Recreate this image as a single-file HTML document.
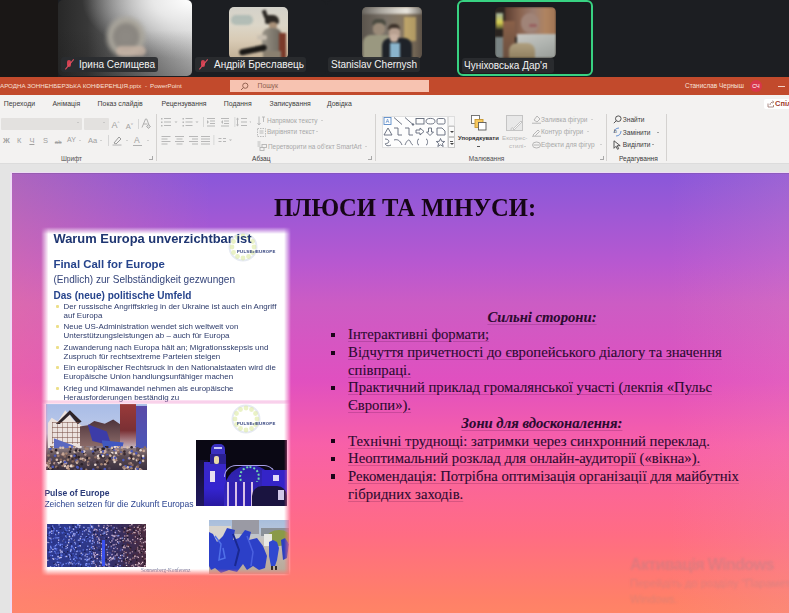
<!DOCTYPE html>
<html><head><meta charset="utf-8">
<style>
*{margin:0;padding:0;box-sizing:border-box}
html,body{width:789px;height:613px;overflow:hidden;background:#e4e4e4;font-family:"Liberation Sans",sans-serif}
.a{position:absolute}
#strip{left:0;top:0;width:789px;height:77px;background:linear-gradient(90deg,#1a1716 0,#1a1716 58px,#1c1e22 58px)}
.tile{position:absolute;top:0;height:76px;border-radius:5px;background:#1c1e22;overflow:hidden}
.lbl{position:absolute;height:15px;background:rgba(42,44,48,.92);border-radius:3px;color:#f2f2f2;font-size:10px;line-height:15px;padding:0 3px;white-space:nowrap}
#title{left:0;top:77px;width:789px;height:18px;background:#c24a2c}
#ribbon{left:0;top:95px;width:789px;height:68px;background:#f3f2f1}
.rt{position:absolute;font-size:8px;color:#4a4a4a;white-space:nowrap;line-height:10px}
.dis{color:#a8a8a8}
#slide{left:11px;top:173px;width:778px;height:440px;overflow:hidden;background:linear-gradient(90deg,rgba(255,135,125,.3) 0px,rgba(255,135,125,0) 200px),linear-gradient(270deg,rgba(235,160,190,.18) 0px,rgba(235,160,190,0) 120px),linear-gradient(180deg,#8a56da 0%,#9058d8 3.4%,#b858d0 20.7%,#cc5cc4 29.8%,#e050c0 47%,#f860a8 61.8%,#ff6c84 82%,#ff8068 97%,#ff8466 100%)}
.st{position:absolute;font-family:"Liberation Serif",serif;color:#240a24;white-space:nowrap}
.hd{position:relative;left:0;width:1062px;text-align:center;font-weight:bold;font-style:italic;white-space:nowrap}
.li{position:relative;padding-left:337.1px;white-space:nowrap}
#txt{-webkit-text-stroke:0.1px #2a0a2c;text-decoration:underline;text-decoration-color:rgba(70,10,60,.2);text-underline-offset:1.5px;text-decoration-thickness:1px}
.li i{position:absolute;left:319.5px;top:6.5px;width:4.3px;height:4.3px;background:#1a0418}
.av{border-radius:5px;overflow:hidden}
.mic{position:absolute;left:3px;top:2px;width:11px;height:11px}
.mic:before{content:"";position:absolute;left:3px;top:1px;width:4px;height:7px;border-radius:2px;background:#d04050}
.mic:after{content:"";position:absolute;left:5px;top:-1px;width:1.3px;height:13px;background:#e05060;transform:rotate(40deg)}
.tb{position:absolute;font-size:6.2px;line-height:12px;color:#f8e0d6;white-space:nowrap}
.inp{background:#e3e1df;border-radius:1px}
.dd{position:absolute;width:0;height:0;border-left:1.6px solid transparent;border-right:1.6px solid transparent;border-top:1.6px solid #b0b0b0}
.dd2{position:absolute;width:0;height:0;border-left:2.2px solid transparent;border-right:2.2px solid transparent;border-top:2.2px solid #444}
.ic{position:absolute;color:#a0a0a0;line-height:10px;white-space:nowrap}
.vs{width:0.8px;background:#d6d6d6}
.gsep{top:19px;width:0.9px;height:47px;background:#d4d2d0}
.lau{position:absolute;width:4px;height:4px;border-right:0.8px solid #a8a8a8;border-bottom:0.8px solid #a8a8a8}
.de{position:absolute;line-height:14px;white-space:nowrap}
.b{font-weight:bold}
.pe{font-size:4.3px;font-weight:bold;color:#2a3a78;letter-spacing:0.25px;white-space:nowrap;line-height:5px}
.bi{position:relative;margin-bottom:2.1px}
.bi:before{content:"";position:absolute;left:-7.5px;top:3px;width:3px;height:3px;background:#ecdf8a;border-radius:1px}
.ph{overflow:hidden;filter:blur(0.5px)}
</style></head><body>
<div id="strip" class="a">
  <div class="tile" style="left:58px;width:134px;background:linear-gradient(180deg,rgba(0,0,0,0) 40%,rgba(30,30,30,.35) 100%),radial-gradient(ellipse 110px 60px at 134px 0px,#ffffff 0%,#e8e8e8 35%,rgba(170,170,170,0) 100%),linear-gradient(90deg,#282828 0%,#383838 22%,#5e5e5e 42%,#808080 62%,#a8a8a8 82%,#c8c8c8 100%)">
    <div class="a" style="left:0;top:0;width:134px;height:76px;filter:blur(1.5px)">
    <div class="a" style="left:46px;top:14px;width:44px;height:46px;border-radius:22px 22px 12px 12px;background:radial-gradient(ellipse 50% 50% at 50% 50%,#8e8a84 0%,#8a8680 50%,#aaa69c 72%,rgba(150,150,140,0) 100%)"></div>
    <div class="a" style="left:58px;top:46px;width:30px;height:10px;border-radius:5px;background:rgba(200,180,165,.8)"></div>
    </div>
    <div class="lbl" style="left:3px;top:57px;width:97px"><span class="mic"></span><span style="position:absolute;left:18px;top:0">Ірина Селищева</span></div>
  </div>
  <div class="tile" style="left:193px;width:133px">
    <div class="a av" style="left:36px;top:7px;width:59px;height:52px;background:linear-gradient(180deg,#d4d2ca 0%,#dcd6c8 35%,#d8cab4 65%,#c0ae94 100%)">
      <div class="a" style="left:0;top:0;width:59px;height:52px;filter:blur(0.8px)">
      <div class="a" style="left:2px;top:8px;width:22px;height:10px;background:rgba(130,160,160,.45);border-radius:5px"></div>
      <div class="a" style="left:34px;top:3px;width:4px;height:8px;background:#2a2622;transform:rotate(-20deg)"></div>
      <div class="a" style="left:36px;top:8px;width:14px;height:9px;background:#2c2824;border-radius:4px 6px 2px 2px"></div>
      <div class="a" style="left:40px;top:15px;width:8px;height:7px;background:#a89078;border-radius:3px"></div>
      <div class="a" style="left:33px;top:21px;width:20px;height:26px;background:linear-gradient(90deg,#9a9488,#6a645a);border-radius:8px 8px 3px 3px"></div>
      <div class="a" style="left:28px;top:28px;width:10px;height:5px;background:#c8beb0;border-radius:2px"></div>
      <div class="a" style="left:50px;top:26px;width:7px;height:26px;background:#7a3a2a"></div>
      <div class="a" style="left:34px;top:44px;width:18px;height:8px;background:#8a8070"></div>
      <div class="a" style="left:10px;top:40px;width:28px;height:6px;background:#1a1816;border-radius:3px;transform:rotate(-12deg)"></div>
      </div>
    </div>
    <div class="lbl" style="left:2px;top:57px;width:111px"><span class="mic"></span><span style="position:absolute;left:19px;top:0">Андрій Бреславець</span></div>
  </div>
  <div class="tile" style="left:327px;width:129px">
    <div class="a av" style="left:35px;top:7px;width:60px;height:52px;background:linear-gradient(90deg,#5a544c 0%,#7a7268 40%,#8a7a62 75%,#5a5046 100%)">
      <div class="a" style="left:0;top:0;width:60px;height:52px;filter:blur(0.8px)">
      <div class="a" style="left:0;top:0;width:60px;height:7px;background:linear-gradient(90deg,#6a6660,#a8a49c 30%,#d8d4cc 60%,#e8e4dc 75%,#7a7670)"></div>
      <div class="a" style="left:42px;top:10px;width:12px;height:24px;background:rgba(220,190,110,.6)"></div>
      <div class="a" style="left:10px;top:12px;width:14px;height:6px;background:#4a4a40;border-radius:5px 5px 1px 1px"></div>
      <div class="a" style="left:11px;top:16px;width:12px;height:12px;background:#9a8a78;border-radius:5px"></div>
      <div class="a" style="left:1px;top:28px;width:30px;height:24px;background:#9a9880;border-radius:8px 8px 0 0"></div>
      <div class="a" style="left:26px;top:17px;width:12px;height:6px;background:#3a3028;border-radius:5px 5px 1px 1px"></div>
      <div class="a" style="left:27px;top:21px;width:11px;height:12px;background:#b8a090;border-radius:4px"></div>
      <div class="a" style="left:20px;top:31px;width:30px;height:22px;background:#1e2228;border-radius:8px 8px 0 0"></div>
      <div class="a" style="left:28px;top:36px;width:10px;height:16px;background:#8ab4cc"></div>
      <div class="a" style="left:28px;top:27px;width:8px;height:8px;background:#c8b0a0;border-radius:3px"></div>
      </div>
    </div>
    <div class="lbl" style="left:1px;top:57px;width:92px"><span style="position:absolute;left:3px;top:0">Stanislav Chernysh</span></div>
  </div>
  <div class="tile" style="left:457px;width:136px;height:76px;border:2.2px solid #38d282;border-radius:6px;background:#1a1c1f">
    <div class="a av" style="left:36px;top:5px;width:61px;height:51px;background:#2a2420">
      <div class="a" style="left:0;top:0;width:61px;height:51px;filter:blur(1.2px)">
      <div class="a" style="left:10px;top:0;width:51px;height:30px;background:linear-gradient(90deg,#5a3c30 0%,#8a6450 30%,#9a7c70 55%,#b08460 80%,#a07454 100%)"></div>
      <div class="a" style="left:1px;top:6px;width:7px;height:16px;background:linear-gradient(180deg,#a0b0a0,#d8d050 60%,#505030)"></div>
      <div class="a" style="left:26px;top:6px;width:18px;height:20px;border-radius:9px;background:#a08478"></div>
      <div class="a" style="left:34px;top:17px;width:8px;height:3px;border-radius:2px;background:#986060"></div>
      <div class="a" style="left:8px;top:14px;width:12px;height:37px;background:linear-gradient(180deg,#8a6048,#6a5040)"></div>
      <div class="a" style="left:22px;top:27px;width:39px;height:24px;background:linear-gradient(160deg,#c8c8c4,#b0b4b0 50%,#989c98)"></div>
      <div class="a" style="left:14px;top:36px;width:26px;height:15px;border-radius:8px 8px 0 0;background:linear-gradient(180deg,#b0a080,#908060)"></div>
      <div class="a" style="left:0;top:30px;width:8px;height:21px;background:#7a8484"></div>
      </div>
    </div>
    <div class="lbl" style="left:3px;top:56px;width:92px"><span style="position:absolute;left:2px;top:0">Чуніховська Дар'я</span></div>
  </div>
</div>
<div id="title" class="a">
  <div class="tb" style="left:0;top:3px">АРОДНА ЗОННЕНБЕРЗЬКА КОНФЕРЕНЦІЯ.pptx</div>
  <div class="tb" style="left:145px;top:3px">-</div>
  <div class="tb" style="left:150px;top:3px">PowerPoint</div>
  <div class="a" style="left:230px;top:3px;width:199px;height:12px;background:#f7c3b1">
    <svg class="a" style="left:10px;top:1.5px" width="9" height="9" viewBox="0 0 9 9"><circle cx="5.3" cy="3.7" r="2.6" fill="none" stroke="#8a5a4a" stroke-width="0.9"/><line x1="3.4" y1="5.6" x2="1" y2="8" stroke="#8a5a4a" stroke-width="0.9"/></svg>
    <div class="a" style="left:27.5px;top:1px;font-size:6.8px;line-height:10px;color:#8e5e50">Пошук</div>
  </div>
  <div class="tb" style="left:685px;top:3px;color:#f8e2da;font-size:6.45px">Станислав Черныш</div>
  <div class="a" style="left:750px;top:3px;width:12px;height:12px;border-radius:6px;background:#d8364a;color:#fff;font-size:5.5px;line-height:12px;text-align:center">СЧ</div>
  <div class="a" style="left:778px;top:8.5px;width:7px;height:1px;background:#f2d0c4"></div>
</div>
<div id="ribbon" class="a">
  <div class="rt" style="left:3.8px;top:3.5px;font-size:6.9px;color:#3c3c3c">Переходи</div>
  <div class="rt" style="left:52.5px;top:3.5px;font-size:6.9px;color:#3c3c3c">Анімація</div>
  <div class="rt" style="left:97.6px;top:3.5px;font-size:6.9px;color:#3c3c3c">Показ слайдів</div>
  <div class="rt" style="left:161.6px;top:3.5px;font-size:6.9px;color:#3c3c3c">Рецензування</div>
  <div class="rt" style="left:223.8px;top:3.5px;font-size:6.9px;color:#3c3c3c">Подання</div>
  <div class="rt" style="left:269.5px;top:3.5px;font-size:6.9px;color:#3c3c3c">Записування</div>
  <div class="rt" style="left:327px;top:3.5px;font-size:6.9px;color:#3c3c3c">Довідка</div>
  <div class="a" style="left:764px;top:4px;width:30px;height:10px;background:#fff;border-radius:2px"></div>
  <svg class="a" style="left:767px;top:5px" width="8" height="8" viewBox="0 0 8 8"><path d="M1 3.5v3.5h5.5V5" fill="none" stroke="#a08078" stroke-width="0.9"/><path d="M3 5c0-2 1.5-3 3.5-3M5.5 0.8l1.3 1.2-1.3 1.2" fill="none" stroke="#a08078" stroke-width="0.9"/></svg>
  <div class="a" style="left:775px;top:3.5px;font-size:7.5px;line-height:10px;font-weight:bold;color:#a0402a">Спіл</div>

  <!-- Font group -->
  <div class="a inp" style="left:1px;top:23px;width:81px;height:12px"><span class="dd" style="left:76px;top:4px"></span></div>
  <div class="a inp" style="left:84px;top:23px;width:24.5px;height:12px"><span class="dd" style="left:19px;top:4px"></span></div>
  <div class="ic" style="left:111.5px;top:23px;font-size:9px">A<sup style="font-size:4px">^</sup></div>
  <div class="ic" style="left:125.8px;top:24px;font-size:7.5px">A<sup style="font-size:4px">˅</sup></div>
  <div class="a vs" style="left:137.5px;top:24px;height:10px"></div>
  <svg class="a" style="left:141px;top:23px" width="10" height="12" viewBox="0 0 10 12" fill="none" stroke="#a8a8a8" stroke-width="0.9"><path d="M1 9.5L4.5 1h1.2L8 7M2.5 6h4"/><path d="M5.5 8.5l2-2 2 2-2 2z" fill="#d8d8d8"/></svg>
  <div class="ic" style="left:3px;top:41px;font-size:7.5px;font-weight:bold">Ж</div>
  <div class="ic" style="left:17px;top:41px;font-size:7.5px">К</div>
  <div class="ic" style="left:29.4px;top:41px;font-size:7.5px;text-decoration:underline">Ч</div>
  <div class="ic" style="left:43px;top:41px;font-size:7.5px">S</div>
  <div class="ic" style="left:54.8px;top:42px;font-size:6px;text-decoration:line-through">ab</div>
  <div class="ic" style="left:67px;top:40px;font-size:7px">AY</div><span class="dd" style="left:79px;top:45px"></span>
  <div class="ic" style="left:88px;top:41px;font-size:7.5px">Aa</div><span class="dd" style="left:99.5px;top:45px"></span>
  <div class="a vs" style="left:107.5px;top:40px;height:11px"></div>
  <svg class="a" style="left:112px;top:40px" width="11" height="11" viewBox="0 0 11 11"><path d="M2 8l5-6 2 2-5 5z" fill="none" stroke="#9a9a9a" stroke-width="1"/><rect x="0.5" y="9.3" width="9" height="1.5" fill="#c8c8c8"/></svg><span class="dd" style="left:126px;top:45px"></span>
  <div class="ic" style="left:134px;top:40px;font-size:8.5px">A</div><div class="a" style="left:133px;top:50px;width:9px;height:1.3px;background:#b0b0b0"></div><span class="dd" style="left:146.5px;top:45px"></span>
  <div class="rt" style="left:61px;top:59px;color:#505050;font-size:6.4px">Шрифт</div>
  <div class="lau" style="left:149px;top:60.5px"></div>
  <div class="a gsep" style="left:155.5px"></div>

  <!-- Paragraph group -->
  <svg class="a" style="left:161px;top:22px" width="90" height="10" viewBox="0 0 90 10" fill="#b8b8b8">
    <rect x="0" y="1" width="1.5" height="1.5"/><rect x="3" y="1" width="7" height="1"/><rect x="0" y="4.5" width="1.5" height="1.5"/><rect x="3" y="4.5" width="7" height="1"/><rect x="0" y="8" width="1.5" height="1.5"/><rect x="3" y="8" width="7" height="1"/>
    <path d="M13.5 4.5h3l-1.5 1.5z"/>
    <rect x="21.5" y="1" width="1.5" height="1.5"/><rect x="24.5" y="1" width="7" height="1"/><rect x="21.5" y="4.5" width="1.5" height="1.5"/><rect x="24.5" y="4.5" width="7" height="1"/><rect x="21.5" y="8" width="1.5" height="1.5"/><rect x="24.5" y="8" width="7" height="1"/>
    <path d="M34.5 4.5h3l-1.5 1.5z"/>
    <rect x="42" y="0" width="0.8" height="10" fill="#d0d0d0"/>
    <rect x="46" y="1" width="8" height="1"/><rect x="49" y="3.5" width="5" height="1"/><rect x="49" y="6" width="5" height="1"/><rect x="46" y="8.5" width="8" height="1"/><path d="M46 3l2 2-2 2z"/>
    <rect x="60" y="1" width="8" height="1"/><rect x="63" y="3.5" width="5" height="1"/><rect x="63" y="6" width="5" height="1"/><rect x="60" y="8.5" width="8" height="1"/><path d="M62 3l-2 2 2 2z"/>
    <rect x="73.5" y="0" width="0.8" height="10" fill="#d0d0d0"/>
    <rect x="80" y="1" width="6" height="1"/><rect x="80" y="4.5" width="6" height="1"/><rect x="80" y="8" width="6" height="1"/><path d="M76.5 0.5l1.5 2h-3zM76.5 9.5l1.5-2h-3z"/><rect x="76" y="2" width="1" height="6"/>
    <path d="M88.5 4.5h3l-1.5 1.5z"/>
  </svg>
  <svg class="a" style="left:161px;top:40px" width="72" height="10" viewBox="0 0 72 10" fill="#b8b8b8">
    <rect x="0.5" y="1" width="9" height="1"/><rect x="0.5" y="3.5" width="6" height="1"/><rect x="0.5" y="6" width="9" height="1"/><rect x="0.5" y="8.5" width="6" height="1"/>
    <rect x="14" y="1" width="9" height="1"/><rect x="15.5" y="3.5" width="6" height="1"/><rect x="14" y="6" width="9" height="1"/><rect x="15.5" y="8.5" width="6" height="1"/>
    <rect x="28" y="1" width="9" height="1"/><rect x="31" y="3.5" width="6" height="1"/><rect x="28" y="6" width="9" height="1"/><rect x="31" y="8.5" width="6" height="1"/>
    <rect x="40" y="1" width="9" height="1"/><rect x="40" y="3.5" width="9" height="1"/><rect x="40" y="6" width="9" height="1"/><rect x="40" y="8.5" width="9" height="1"/>
    <rect x="52.5" y="0" width="0.8" height="10" fill="#d0d0d0"/>
    <rect x="57.5" y="3" width="3" height="1"/><rect x="62" y="3" width="3" height="1"/><rect x="57.5" y="6" width="3" height="1"/><rect x="62" y="6" width="3" height="1"/>
    <path d="M68 4.5h3l-1.5 1.5z"/>
  </svg>
  <svg class="a" style="left:257px;top:21px" width="9" height="10" viewBox="0 0 9 10" fill="none" stroke="#b4b4b4" stroke-width="0.9"><path d="M2 0.5v8M0.5 7l1.5 2 1.5-2M5 1h3M6.5 1v5"/></svg>
  <div class="rt dis" style="left:267px;top:21px;font-size:6.5px">Напрямок тексту</div><span class="dd" style="left:320.5px;top:25px"></span>
  <svg class="a" style="left:257px;top:33px" width="9" height="9" viewBox="0 0 9 9" fill="none" stroke="#b4b4b4" stroke-width="0.9"><rect x="0.5" y="0.5" width="8" height="8" stroke-dasharray="1.5 1"/><path d="M2.5 3h4M2.5 5h4"/></svg>
  <div class="rt dis" style="left:267px;top:32px;font-size:6.5px">Вирівняти текст</div><span class="dd" style="left:316px;top:36px"></span>
  <svg class="a" style="left:257px;top:46px" width="10" height="10" viewBox="0 0 10 10" fill="none" stroke="#b4b4b4" stroke-width="0.9"><path d="M0.5 1h3M0.5 3h3M0.5 5h3"/><rect x="5" y="3.5" width="4.5" height="3"/><rect x="3" y="6.5" width="4" height="3"/></svg>
  <div class="rt dis" style="left:268px;top:46.5px;font-size:6.4px">Перетворити на об'єкт SmartArt</div><span class="dd" style="left:365px;top:50.5px"></span>
  <div class="rt" style="left:252px;top:59px;color:#3a3a3a;font-size:6.6px">Абзац</div>
  <div class="lau" style="left:152px;top:60.5px;display:none"></div>
  <div class="lau" style="left:368px;top:60.5px"></div>
  <div class="a gsep" style="left:375.4px"></div>

  <!-- Drawing group -->
  <div class="a" style="left:381.5px;top:20.5px;width:66px;height:32.5px;background:#fdfdfd;border:0.6px solid #e0e0e0"></div>
  <svg class="a" style="left:383px;top:21px" width="64" height="32" viewBox="0 0 64 32" fill="none" stroke="#606878" stroke-width="0.9">
    <rect x="1" y="1.5" width="7" height="7" stroke="#5a8ac8"/><path d="M3 7l1.5-4 1.5 4M3.5 5.5h2" stroke="#5a8ac8" stroke-width="0.6"/>
    <path d="M11 1.5l8 7"/><path d="M22 1.5l8 7"/><circle cx="30" cy="8.5" r="0.8" fill="#606878"/>
    <rect x="33" y="2.5" width="8" height="5.5"/><ellipse cx="47.5" cy="5.2" rx="4.5" ry="2.8"/><rect x="54" y="2.5" width="8" height="5.5" rx="1.5"/>
    <path d="M1 19l4-7 4 7z"/><path d="M11 12h4v7h4"/><path d="M22 12h4v7h4"/><path d="M33 14h4v-2l4 3.5-4 3.5v-2h-4z"/><path d="M45.5 12h3v4h2l-3.5 3.5-3.5-3.5h2z"/><path d="M54 12h5l3 3v4h-8z"/>
    <path d="M2 23c3 0 5 2 3 4-2 1-4 0-2 2 1 1 3 1 5 0"/><path d="M11 24c3-1 6 0 8 5"/><path d="M22 29c2-5 4-6 5-4s2 4 3 4"/><path d="M36 23c-2 0-1 3-2 3 1 0 0 3 2 3"/><path d="M43 23c2 0 1 3 2 3-1 0 0 3-2 3"/><path d="M57.5 22.5l1.2 2.8 3 .2-2.3 2 .8 3-2.7-1.7-2.7 1.7.8-3-2.3-2 3-.2z"/>
  </svg>
  <div class="a" style="left:447.5px;top:20.5px;width:7px;height:10.8px;background:#f6f6f6;border:0.6px solid #dedede"></div>
  <div class="a" style="left:447.5px;top:31.3px;width:7px;height:10.8px;background:#fbfbfb;border:0.6px solid #c8c8c8"><span class="dd2" style="left:1.2px;top:3.8px"></span></div>
  <div class="a" style="left:447.5px;top:42.1px;width:7px;height:10.9px;background:#fbfbfb;border:0.6px solid #c8c8c8"><div class="a" style="left:1.5px;top:2.5px;width:3px;height:0.8px;background:#555"></div><span class="dd2" style="left:1.2px;top:4.5px"></span></div>
  <svg class="a" style="left:471px;top:20px" width="16" height="16" viewBox="0 0 16 16"><rect x="0.5" y="0.5" width="8" height="8" fill="#fff" stroke="#6a6a6a" stroke-width="0.9"/><rect x="4" y="4.5" width="8" height="8" fill="#f6c860" stroke="#c89830" stroke-width="0.9"/><rect x="7.5" y="7.5" width="7.5" height="7.5" fill="#fff" stroke="#5a5a5a" stroke-width="0.9"/></svg>
  <div class="a" style="left:458px;top:38.5px;font-size:5.9px;line-height:8px;font-weight:bold;color:#333;white-space:nowrap">Упорядкувати</div>
  <div class="a" style="left:477px;top:50.5px;width:3px;height:1px;background:#555"></div>
  <svg class="a" style="left:506px;top:20px" width="18" height="17" viewBox="0 0 18 17" fill="none" stroke="#c4c4c4" stroke-width="1"><rect x="0.5" y="0.5" width="16" height="15" fill="#e8e8e8"/><path d="M7 14l8-8 1 1-8 8z" fill="#f8f8f8"/><path d="M5 15c0-2 1-3 2-2"/></svg>
  <div class="a dis" style="left:502px;top:38.5px;font-size:6.2px;line-height:8px;color:#b4b4b4;white-space:nowrap">Експрес-</div>
  <div class="a dis" style="left:509px;top:46.5px;font-size:6.2px;line-height:8px;color:#b4b4b4;white-space:nowrap">стилі</div><span class="dd" style="left:524px;top:50.5px"></span>
  <svg class="a" style="left:532px;top:20px" width="9" height="9" viewBox="0 0 9 9" fill="none" stroke="#b0b0b0" stroke-width="0.9"><path d="M2 5l3-4 3 3-3 3z"/><rect x="0" y="7.6" width="9" height="1.4" fill="#c8c8c8" stroke="none"/></svg>
  <div class="rt dis" style="left:541px;top:20px;font-size:6.5px">Заливка фігури</div><span class="dd" style="left:591px;top:24px"></span>
  <svg class="a" style="left:532px;top:32.5px" width="9" height="9" viewBox="0 0 9 9" fill="none" stroke="#b0b0b0" stroke-width="0.9"><path d="M1 7l5-5 1.5 1.5-5 5z"/><rect x="0" y="7.6" width="9" height="1.4" fill="#c8c8c8" stroke="none"/></svg>
  <div class="rt dis" style="left:541px;top:32px;font-size:6.5px">Контур фігури</div><span class="dd" style="left:587px;top:36px"></span>
  <svg class="a" style="left:532px;top:45px" width="9" height="9" viewBox="0 0 9 9" fill="none" stroke="#b0b0b0" stroke-width="0.9"><ellipse cx="4.5" cy="5" rx="4" ry="3"/><path d="M1.5 5h6"/></svg>
  <div class="rt dis" style="left:541px;top:44.5px;font-size:6.5px">Ефекти для фігур</div><span class="dd" style="left:600px;top:48.5px"></span>
  <div class="rt" style="left:468.8px;top:59px;color:#505050;font-size:6.5px">Малювання</div>
  <div class="lau" style="left:600px;top:60.5px"></div>
  <div class="a gsep" style="left:606.4px"></div>

  <!-- Editing -->
  <svg class="a" style="left:613px;top:20px" width="9" height="9" viewBox="0 0 9 9" fill="none" stroke="#444" stroke-width="0.9"><circle cx="5.3" cy="3.7" r="2.8"/><path d="M3.3 5.7L0.8 8.2"/></svg>
  <div class="rt" style="left:622.8px;top:20px;font-size:6.6px;color:#3a3a3a">Знайти</div>
  <svg class="a" style="left:613px;top:32px" width="9" height="10" viewBox="0 0 9 10" fill="none" stroke-width="0.9"><path d="M1 6c0-3 2-5 5-5" stroke="#5a8ad0"/><path d="M8 4c0 3-2 5-5 5" stroke="#5a8ad0"/><text x="1" y="6" font-size="5" fill="#555" stroke="none" font-family="Liberation Sans">b</text></svg>
  <div class="rt" style="left:622.8px;top:32.5px;font-size:6.6px;color:#3a3a3a">Замінити</div><span class="dd" style="left:656.5px;top:36.5px;border-top-color:#555"></span>
  <svg class="a" style="left:613px;top:44.5px" width="9" height="10" viewBox="0 0 9 10" fill="none" stroke="#444" stroke-width="0.9"><path d="M1 0.8v7.5l2-2 1.5 3 1.2-.6-1.5-3h3z"/></svg>
  <div class="rt" style="left:622.8px;top:44.5px;font-size:6.6px;color:#3a3a3a">Виділити</div><span class="dd" style="left:651.5px;top:48.5px;border-top-color:#555"></span>
  <div class="rt" style="left:619px;top:59px;color:#3a3a3a;font-size:6.6px">Редагування</div>
  <div class="a gsep" style="left:666.4px"></div>
</div>
<div id="slide" class="a">
  <div class="st" style="left:263.4px;top:22.2px;font-size:26px;color:#160616;line-height:26px;font-weight:bold;transform:scaleX(0.945);transform-origin:0 0">ПЛЮСИ ТА МІНУСИ:</div>
  <div id="txt" class="a" style="left:0;top:135.6px;width:778px;font-family:'Liberation Serif',serif;font-size:14.7px;line-height:17.7px;color:#2c0a30">
    <div class="hd">Сильні сторони:</div>
    <div class="li"><i></i>Інтерактивні формати;</div>
    <div class="li"><i></i>Відчуття причетності до європейського діалогу та значення<br>співпраці.</div>
    <div class="li"><i></i>Практичний приклад громалянської участі (лекпія «Пульс<br>Європи»).</div>
    <div class="hd">Зони для вдосконалення:</div>
    <div class="li"><i></i>Технічні труднощі: затримки через синхронний переклад.</div>
    <div class="li"><i></i>Неоптимальний розклад для онлайн-аудиторії («вікна»).</div>
    <div class="li"><i></i>Рекомендація: Потрібна оптимізація організації для майбутніх<br>гібридних заходів.</div>
  </div>
</div>
<div class="a" style="left:10px;top:171.5px;width:779px;height:1.5px;background:#eedcf4"></div>
<div class="a" style="left:10px;top:171.5px;width:2px;height:442px;background:#eedcf4"></div>
<div class="a" style="left:12px;top:173px;width:777px;height:1px;background:rgba(120,80,150,.35)"></div>
<div class="a" style="left:0;top:163px;width:789px;height:1px;background:#dcdcdc"></div>
<div id="col2" class="a" style="left:0;top:0;width:789px;height:613px;-webkit-mask-image:linear-gradient(90deg,transparent 41px,#000 48px,#000 284px,transparent 291px),linear-gradient(180deg,transparent 400.5px,#000 404.5px,#000 569px,transparent 576px);-webkit-mask-composite:source-in;mask-composite:intersect">
  <div class="a" style="left:38px;top:398px;width:256px;height:182px;background:#fff"></div>
  <!-- photos -->
  <div class="a ph" style="left:45.6px;top:404.2px;width:101px;height:65.5px;background:linear-gradient(180deg,#a8bce6 0%,#b4c4e8 25%,#c8c0d0 45%,#9a8890 60%,#6a5a68 75%,#4a3a48 100%)">
    <div class="a" style="left:2px;top:6px;width:34px;height:38px;background:#ece2de;clip-path:polygon(0 35%,12% 20%,30% 30%,52% 0,78% 28%,100% 40%,100% 100%,0 100%)"></div>
    <div class="a" style="left:10px;top:6px;width:26px;height:14px;background:#2e2428;clip-path:polygon(0 100%,55% 0,100% 80%,85% 100%,55% 30%,15% 100%)"></div>
    <div class="a" style="left:6px;top:18px;width:28px;height:22px;background:repeating-linear-gradient(180deg,rgba(120,80,70,.55) 0 1px,rgba(0,0,0,0) 1px 5px),repeating-linear-gradient(90deg,rgba(120,80,70,.45) 0 1px,rgba(0,0,0,0) 1px 5px)"></div>
    <div class="a" style="left:34px;top:14px;width:42px;height:28px;background:linear-gradient(180deg,#4a3038,#8a6a68);clip-path:polygon(0 30%,20% 25%,35% 10%,60% 20%,80% 5%,100% 25%,100% 100%,0 100%)"></div>
    <div class="a" style="left:74px;top:0;width:16px;height:44px;background:linear-gradient(180deg,#9a3a3a,#7a3034 60%,#c8b8c0)"></div>
    <div class="a" style="left:90px;top:2px;width:11px;height:45px;background:linear-gradient(180deg,#5a4aa8,#4a58b8)"></div>
    <div class="a" style="left:42px;top:20px;width:24px;height:24px;background:#3c3ca8;clip-path:polygon(0 0,80% 30%,100% 90%,20% 70%)"></div>
    <div class="a" style="left:8px;top:34px;width:20px;height:18px;background:#5a68c0;clip-path:polygon(0 0,100% 40%,80% 100%,0 70%)"></div>
    <div class="a" style="left:56px;top:36px;width:22px;height:12px;background:#4058c0;clip-path:polygon(0 0,100% 20%,90% 100%,10% 80%)"></div>
    <div class="a" style="left:0;top:44px;width:101px;height:22px;background:linear-gradient(180deg,#8a7a80,#5a4a50 40%,#3a3040)"></div>
    <svg class="a" style="left:0;top:42px" width="101" height="24"><circle cx="18.8" cy="10.4" r="1.3" fill="#8a6a60"/><circle cx="22.0" cy="13.7" r="1.3" fill="#a08070"/><circle cx="85.2" cy="12.5" r="1.3" fill="#3a2a30"/><circle cx="71.9" cy="4.7" r="1.3" fill="#c8a898"/><circle cx="83.7" cy="21.3" r="1.3" fill="#4a58b8"/><circle cx="76.9" cy="4.2" r="1.3" fill="#a08070"/><circle cx="61.9" cy="17.0" r="1.3" fill="#3a2a30"/><circle cx="58.9" cy="4.9" r="1.3" fill="#c8a898"/><circle cx="69.9" cy="12.5" r="1.3" fill="#d8c0b0"/><circle cx="52.4" cy="8.3" r="1.3" fill="#5a4a58"/><circle cx="85.0" cy="20.7" r="1.3" fill="#4a58b8"/><circle cx="9.1" cy="9.8" r="1.3" fill="#4a58b8"/><circle cx="13.5" cy="16.0" r="1.3" fill="#3a2a30"/><circle cx="18.8" cy="20.0" r="1.3" fill="#e8d8d0"/><circle cx="3.7" cy="16.9" r="1.3" fill="#b09088"/><circle cx="60.1" cy="0.1" r="1.3" fill="#2a2028"/><circle cx="94.1" cy="23.2" r="1.3" fill="#c8a898"/><circle cx="12.2" cy="17.2" r="1.3" fill="#e8d8d0"/><circle cx="78.7" cy="20.8" r="1.3" fill="#b09088"/><circle cx="75.9" cy="1.5" r="1.3" fill="#c8a898"/><circle cx="96.4" cy="11.9" r="1.3" fill="#2a2028"/><circle cx="2.6" cy="19.3" r="1.3" fill="#a08070"/><circle cx="2.1" cy="23.2" r="1.3" fill="#3a2a30"/><circle cx="62.5" cy="4.0" r="1.3" fill="#5a4a58"/><circle cx="25.3" cy="19.6" r="1.3" fill="#d8c0b0"/><circle cx="2.0" cy="22.2" r="1.3" fill="#3a2a30"/><circle cx="26.4" cy="20.1" r="1.3" fill="#b09088"/><circle cx="46.9" cy="5.7" r="1.3" fill="#4a58b8"/><circle cx="10.4" cy="20.9" r="1.3" fill="#a08070"/><circle cx="4.6" cy="3.0" r="1.3" fill="#4a58b8"/><circle cx="59.2" cy="18.3" r="1.3" fill="#c8a898"/><circle cx="12.3" cy="9.7" r="1.3" fill="#a08070"/><circle cx="54.7" cy="5.5" r="1.3" fill="#3a2a30"/><circle cx="14.9" cy="13.7" r="1.3" fill="#8a6a60"/><circle cx="16.6" cy="19.8" r="1.3" fill="#8a6a60"/><circle cx="70.1" cy="14.3" r="1.3" fill="#b09088"/><circle cx="53.1" cy="9.5" r="1.3" fill="#d8c0b0"/><circle cx="78.5" cy="8.1" r="1.3" fill="#3a2a30"/><circle cx="84.7" cy="17.2" r="1.3" fill="#b09088"/><circle cx="81.2" cy="21.9" r="1.3" fill="#8a6a60"/><circle cx="85.6" cy="1.3" r="1.3" fill="#2a2028"/><circle cx="14.8" cy="16.3" r="1.3" fill="#e8d8d0"/><circle cx="25.2" cy="10.1" r="1.3" fill="#d8c0b0"/><circle cx="36.8" cy="12.7" r="1.3" fill="#c8a898"/><circle cx="32.8" cy="4.8" r="1.3" fill="#d8c0b0"/><circle cx="22.8" cy="10.1" r="1.3" fill="#8a6a60"/><circle cx="78.4" cy="22.5" r="1.3" fill="#d8c0b0"/><circle cx="81.7" cy="21.2" r="1.3" fill="#d8c0b0"/><circle cx="3.5" cy="15.4" r="1.3" fill="#5a4a58"/><circle cx="92.7" cy="15.0" r="1.3" fill="#2a2028"/><circle cx="81.4" cy="0.9" r="1.3" fill="#c8a898"/><circle cx="25.3" cy="12.5" r="1.3" fill="#8a6a60"/><circle cx="23.9" cy="0.9" r="1.3" fill="#c8a898"/><circle cx="30.8" cy="15.5" r="1.3" fill="#c8a898"/><circle cx="6.1" cy="23.0" r="1.3" fill="#2a2028"/><circle cx="91.0" cy="2.0" r="1.3" fill="#b09088"/><circle cx="53.9" cy="3.6" r="1.3" fill="#c8a898"/><circle cx="51.7" cy="21.2" r="1.3" fill="#8a6a60"/><circle cx="58.3" cy="6.6" r="1.3" fill="#c8a898"/><circle cx="74.8" cy="6.9" r="1.3" fill="#4a58b8"/><circle cx="61.6" cy="13.7" r="1.3" fill="#8a6a60"/><circle cx="20.3" cy="17.0" r="1.3" fill="#4a58b8"/><circle cx="90.1" cy="7.3" r="1.3" fill="#4a58b8"/><circle cx="47.4" cy="7.5" r="1.3" fill="#3a2a30"/><circle cx="33.7" cy="4.5" r="1.3" fill="#2a2028"/><circle cx="38.7" cy="14.1" r="1.3" fill="#d8c0b0"/><circle cx="93.3" cy="3.9" r="1.3" fill="#3a2a30"/><circle cx="32.7" cy="7.8" r="1.3" fill="#5a4a58"/><circle cx="28.8" cy="23.7" r="1.3" fill="#5a4a58"/><circle cx="5.7" cy="0.5" r="1.3" fill="#2a2028"/><circle cx="6.7" cy="20.9" r="1.3" fill="#4a58b8"/><circle cx="66.4" cy="12.4" r="1.3" fill="#4a58b8"/><circle cx="35.8" cy="18.3" r="1.3" fill="#2a2028"/><circle cx="22.7" cy="23.0" r="1.3" fill="#a08070"/><circle cx="42.1" cy="16.0" r="1.3" fill="#a08070"/><circle cx="68.2" cy="14.8" r="1.3" fill="#5a4a58"/><circle cx="82.9" cy="12.4" r="1.3" fill="#4a58b8"/><circle cx="27.1" cy="15.1" r="1.3" fill="#a08070"/><circle cx="41.7" cy="2.5" r="1.3" fill="#8a6a60"/><circle cx="77.3" cy="14.1" r="1.3" fill="#4a58b8"/><circle cx="40.1" cy="23.8" r="1.3" fill="#a08070"/><circle cx="42.2" cy="18.8" r="1.3" fill="#b09088"/><circle cx="61.3" cy="9.1" r="1.3" fill="#4a58b8"/><circle cx="70.0" cy="6.9" r="1.3" fill="#e8d8d0"/><circle cx="29.6" cy="9.4" r="1.3" fill="#2a2028"/><circle cx="60.1" cy="15.6" r="1.3" fill="#d8c0b0"/><circle cx="79.5" cy="20.4" r="1.3" fill="#4a58b8"/><circle cx="38.4" cy="7.2" r="1.3" fill="#2a2028"/><circle cx="30.7" cy="3.5" r="1.3" fill="#b09088"/><circle cx="38.1" cy="5.6" r="1.3" fill="#e8d8d0"/><circle cx="32.7" cy="20.2" r="1.3" fill="#3a2a30"/><circle cx="96.8" cy="4.9" r="1.3" fill="#8a6a60"/><circle cx="90.0" cy="22.9" r="1.3" fill="#d8c0b0"/><circle cx="4.8" cy="13.6" r="1.3" fill="#4a58b8"/><circle cx="30.3" cy="12.9" r="1.3" fill="#5a4a58"/><circle cx="54.4" cy="24.0" r="1.3" fill="#2a2028"/><circle cx="83.4" cy="17.5" r="1.3" fill="#8a6a60"/><circle cx="39.3" cy="8.6" r="1.3" fill="#b09088"/><circle cx="68.3" cy="10.9" r="1.3" fill="#d8c0b0"/><circle cx="68.3" cy="12.6" r="1.3" fill="#c8a898"/><circle cx="41.4" cy="12.0" r="1.3" fill="#2a2028"/><circle cx="93.8" cy="3.7" r="1.3" fill="#3a2a30"/><circle cx="97.4" cy="11.7" r="1.3" fill="#4a58b8"/><circle cx="77.5" cy="21.6" r="1.3" fill="#b09088"/><circle cx="34.7" cy="12.7" r="1.3" fill="#c8a898"/><circle cx="17.2" cy="7.6" r="1.3" fill="#c8a898"/><circle cx="83.4" cy="12.3" r="1.3" fill="#c8a898"/><circle cx="66.2" cy="7.1" r="1.3" fill="#e8d8d0"/><circle cx="82.9" cy="23.8" r="1.3" fill="#8a6a60"/><circle cx="63.7" cy="12.6" r="1.3" fill="#2a2028"/><circle cx="21.0" cy="21.4" r="1.3" fill="#8a6a60"/><circle cx="18.4" cy="15.1" r="1.3" fill="#b09088"/><circle cx="10.8" cy="13.7" r="1.3" fill="#d8c0b0"/><circle cx="69.9" cy="0.3" r="1.3" fill="#d8c0b0"/><circle cx="31.0" cy="16.6" r="1.3" fill="#d8c0b0"/><circle cx="92.6" cy="9.5" r="1.3" fill="#c8a898"/><circle cx="59.2" cy="16.0" r="1.3" fill="#3a2a30"/><circle cx="17.7" cy="18.5" r="1.3" fill="#b09088"/><circle cx="26.9" cy="15.5" r="1.3" fill="#2a2028"/><circle cx="51.9" cy="3.4" r="1.3" fill="#3a2a30"/><circle cx="41.5" cy="2.9" r="1.3" fill="#a08070"/><circle cx="52.4" cy="12.2" r="1.3" fill="#d8c0b0"/><circle cx="10.1" cy="4.1" r="1.3" fill="#2a2028"/><circle cx="49.5" cy="11.2" r="1.3" fill="#8a6a60"/><circle cx="81.5" cy="1.5" r="1.3" fill="#d8c0b0"/><circle cx="69.1" cy="13.9" r="1.3" fill="#a08070"/><circle cx="72.3" cy="8.5" r="1.3" fill="#a08070"/><circle cx="3.3" cy="15.1" r="1.3" fill="#b09088"/><circle cx="6.4" cy="4.6" r="1.3" fill="#b09088"/><circle cx="39.0" cy="1.3" r="1.3" fill="#8a6a60"/><circle cx="58.8" cy="23.0" r="1.3" fill="#4a58b8"/><circle cx="5.5" cy="5.7" r="1.3" fill="#3a2a30"/><circle cx="4.4" cy="22.3" r="1.3" fill="#a08070"/><circle cx="31.8" cy="21.6" r="1.3" fill="#4a58b8"/><circle cx="30.7" cy="14.5" r="1.3" fill="#4a58b8"/><circle cx="98.9" cy="1.6" r="1.3" fill="#8a6a60"/><circle cx="68.2" cy="14.0" r="1.3" fill="#8a6a60"/><circle cx="31.2" cy="21.0" r="1.3" fill="#4a58b8"/><circle cx="2.3" cy="20.8" r="1.3" fill="#c8a898"/><circle cx="17.5" cy="8.6" r="1.3" fill="#a08070"/><circle cx="0.8" cy="21.2" r="1.3" fill="#8a6a60"/><circle cx="56.7" cy="2.8" r="1.3" fill="#2a2028"/><circle cx="88.0" cy="8.1" r="1.3" fill="#c8a898"/><circle cx="97.1" cy="10.1" r="1.3" fill="#e8d8d0"/><circle cx="55.9" cy="9.3" r="1.3" fill="#4a58b8"/><circle cx="28.6" cy="5.7" r="1.3" fill="#d8c0b0"/><circle cx="28.2" cy="0.6" r="1.3" fill="#a08070"/><circle cx="24.4" cy="3.1" r="1.3" fill="#3a2a30"/><circle cx="27.2" cy="20.0" r="1.3" fill="#a08070"/><circle cx="56.1" cy="11.2" r="1.3" fill="#3a2a30"/><circle cx="16.1" cy="8.5" r="1.3" fill="#8a6a60"/><circle cx="38.1" cy="23.0" r="1.3" fill="#3a2a30"/><circle cx="30.0" cy="11.4" r="1.3" fill="#3a2a30"/><circle cx="23.0" cy="10.9" r="1.3" fill="#a08070"/><circle cx="95.2" cy="24.0" r="1.3" fill="#b09088"/><circle cx="90.9" cy="14.1" r="1.3" fill="#e8d8d0"/><circle cx="54.0" cy="9.7" r="1.3" fill="#2a2028"/><circle cx="21.5" cy="20.9" r="1.3" fill="#c8a898"/><circle cx="68.5" cy="2.2" r="1.3" fill="#5a4a58"/><circle cx="74.3" cy="18.4" r="1.3" fill="#d8c0b0"/><circle cx="66.4" cy="13.6" r="1.3" fill="#5a4a58"/><circle cx="1.5" cy="17.1" r="1.3" fill="#a08070"/><circle cx="78.4" cy="5.6" r="1.3" fill="#3a2a30"/><circle cx="66.9" cy="2.6" r="1.3" fill="#2a2028"/><circle cx="92.3" cy="19.3" r="1.3" fill="#5a4a58"/><circle cx="19.5" cy="17.2" r="1.3" fill="#c8a898"/><circle cx="22.9" cy="3.0" r="1.3" fill="#8a6a60"/><circle cx="28.5" cy="9.7" r="1.3" fill="#4a58b8"/><circle cx="78.3" cy="21.2" r="1.3" fill="#a08070"/><circle cx="94.6" cy="4.2" r="1.3" fill="#e8d8d0"/><circle cx="68.6" cy="15.9" r="1.3" fill="#e8d8d0"/><circle cx="90.6" cy="0.6" r="1.3" fill="#4a58b8"/><circle cx="25.1" cy="20.3" r="1.3" fill="#e8d8d0"/><circle cx="91.5" cy="2.3" r="1.3" fill="#5a4a58"/><circle cx="11.6" cy="21.9" r="1.3" fill="#3a2a30"/><circle cx="72.0" cy="1.0" r="1.3" fill="#d8c0b0"/><circle cx="61.5" cy="10.3" r="1.3" fill="#5a4a58"/><circle cx="15.8" cy="17.7" r="1.3" fill="#2a2028"/><circle cx="31.4" cy="15.3" r="1.3" fill="#a08070"/><circle cx="57.0" cy="5.5" r="1.3" fill="#4a58b8"/><circle cx="72.4" cy="6.1" r="1.3" fill="#8a6a60"/><circle cx="67.7" cy="13.8" r="1.3" fill="#d8c0b0"/><circle cx="11.3" cy="18.3" r="1.3" fill="#5a4a58"/><circle cx="91.0" cy="21.0" r="1.3" fill="#b09088"/><circle cx="61.3" cy="1.1" r="1.3" fill="#3a2a30"/><circle cx="68.8" cy="0.9" r="1.3" fill="#e8d8d0"/><circle cx="21.2" cy="21.9" r="1.3" fill="#c8a898"/><circle cx="42.1" cy="17.9" r="1.3" fill="#b09088"/><circle cx="83.7" cy="6.7" r="1.3" fill="#c8a898"/><circle cx="35.3" cy="22.8" r="1.3" fill="#4a58b8"/><circle cx="94.0" cy="16.6" r="1.3" fill="#4a58b8"/><circle cx="51.4" cy="16.2" r="1.3" fill="#3a2a30"/><circle cx="43.3" cy="12.3" r="1.3" fill="#a08070"/><circle cx="49.4" cy="4.5" r="1.3" fill="#2a2028"/><circle cx="26.4" cy="13.1" r="1.3" fill="#3a2a30"/><circle cx="54.9" cy="6.0" r="1.3" fill="#d8c0b0"/><circle cx="17.0" cy="8.3" r="1.3" fill="#c8a898"/><circle cx="20.3" cy="7.5" r="1.3" fill="#a08070"/><circle cx="69.3" cy="11.7" r="1.3" fill="#4a58b8"/><circle cx="24.0" cy="5.8" r="1.3" fill="#2a2028"/><circle cx="69.8" cy="3.2" r="1.3" fill="#e8d8d0"/><circle cx="70.5" cy="3.2" r="1.3" fill="#a08070"/><circle cx="59.3" cy="5.8" r="1.3" fill="#c8a898"/><circle cx="55.4" cy="18.3" r="1.3" fill="#a08070"/><circle cx="68.4" cy="3.7" r="1.3" fill="#4a58b8"/><circle cx="84.8" cy="9.7" r="1.3" fill="#3a2a30"/><circle cx="11.6" cy="6.9" r="1.3" fill="#e8d8d0"/><circle cx="49.1" cy="1.0" r="1.3" fill="#5a4a58"/><circle cx="30.7" cy="2.7" r="1.3" fill="#5a4a58"/><circle cx="45.2" cy="2.7" r="1.3" fill="#e8d8d0"/><circle cx="45.0" cy="13.7" r="1.3" fill="#5a4a58"/><circle cx="17.0" cy="1.7" r="1.3" fill="#d8c0b0"/><circle cx="47.3" cy="23.5" r="1.3" fill="#4a58b8"/><circle cx="8.5" cy="17.2" r="1.3" fill="#b09088"/><circle cx="26.7" cy="15.5" r="1.3" fill="#8a6a60"/><circle cx="49.3" cy="18.8" r="1.3" fill="#e8d8d0"/><circle cx="0.8" cy="22.1" r="1.3" fill="#5a4a58"/><circle cx="63.4" cy="22.4" r="1.3" fill="#5a4a58"/><circle cx="66.0" cy="1.9" r="1.3" fill="#d8c0b0"/><circle cx="2.6" cy="9.5" r="1.3" fill="#a08070"/><circle cx="29.9" cy="4.5" r="1.3" fill="#2a2028"/><circle cx="85.4" cy="22.2" r="1.3" fill="#a08070"/><circle cx="10.3" cy="17.3" r="1.3" fill="#5a4a58"/><circle cx="75.0" cy="7.8" r="1.3" fill="#a08070"/><circle cx="65.4" cy="8.5" r="1.3" fill="#3a2a30"/><circle cx="37.2" cy="13.2" r="1.3" fill="#e8d8d0"/><circle cx="84.6" cy="6.1" r="1.3" fill="#d8c0b0"/><circle cx="4.2" cy="13.6" r="1.3" fill="#8a6a60"/><circle cx="91.4" cy="22.7" r="1.3" fill="#4a58b8"/><circle cx="42.7" cy="17.5" r="1.3" fill="#5a4a58"/><circle cx="60.9" cy="15.0" r="1.3" fill="#a08070"/><circle cx="69.5" cy="3.9" r="1.3" fill="#4a58b8"/><circle cx="64.3" cy="9.6" r="1.3" fill="#d8c0b0"/><circle cx="85.9" cy="11.5" r="1.3" fill="#3a2a30"/><circle cx="73.0" cy="0.1" r="1.3" fill="#b09088"/><circle cx="86.4" cy="18.9" r="1.3" fill="#8a6a60"/><circle cx="14.5" cy="1.7" r="1.3" fill="#d8c0b0"/><circle cx="52.0" cy="10.1" r="1.3" fill="#e8d8d0"/><circle cx="6.3" cy="0.2" r="1.3" fill="#a08070"/><circle cx="91.3" cy="3.9" r="1.3" fill="#5a4a58"/><circle cx="0.4" cy="19.3" r="1.3" fill="#e8d8d0"/><circle cx="57.3" cy="11.3" r="1.3" fill="#2a2028"/><circle cx="32.7" cy="11.1" r="1.3" fill="#2a2028"/><circle cx="91.8" cy="20.8" r="1.3" fill="#8a6a60"/><circle cx="97.1" cy="14.9" r="1.3" fill="#d8c0b0"/><circle cx="73.0" cy="8.0" r="1.3" fill="#5a4a58"/><circle cx="57.1" cy="10.1" r="1.3" fill="#e8d8d0"/><circle cx="48.6" cy="15.5" r="1.3" fill="#5a4a58"/><circle cx="87.4" cy="12.7" r="1.3" fill="#d8c0b0"/><circle cx="85.7" cy="5.3" r="1.3" fill="#4a58b8"/><circle cx="69.8" cy="3.5" r="1.3" fill="#b09088"/><circle cx="37.6" cy="13.9" r="1.3" fill="#8a6a60"/><circle cx="36.4" cy="5.8" r="1.3" fill="#4a58b8"/><circle cx="40.0" cy="2.7" r="1.3" fill="#a08070"/><circle cx="97.8" cy="4.9" r="1.3" fill="#c8a898"/><circle cx="22.3" cy="20.1" r="1.3" fill="#c8a898"/><circle cx="18.9" cy="16.1" r="1.3" fill="#4a58b8"/><circle cx="22.9" cy="11.0" r="1.3" fill="#2a2028"/><circle cx="57.8" cy="2.7" r="1.3" fill="#2a2028"/><circle cx="91.8" cy="13.6" r="1.3" fill="#8a6a60"/></svg>
  </div>
  <svg class="a" style="left:227.7px;top:402px" width="40" height="36" viewBox="0 0 40 36"><circle cx="18" cy="17" r="13.5" fill="none" stroke="#e6eaf2" stroke-width="2"/><circle cx="29.0" cy="17.0" r="2.4" fill="#dceaa0" opacity="0.6"/><circle cx="27.5" cy="22.5" r="2.4" fill="#dceaa0" opacity="0.6"/><circle cx="23.5" cy="26.5" r="2.4" fill="#dceaa0" opacity="0.6"/><circle cx="18.0" cy="28.0" r="2.4" fill="#dceaa0" opacity="0.6"/><circle cx="12.5" cy="26.5" r="2.4" fill="#dceaa0" opacity="0.6"/><circle cx="8.5" cy="22.5" r="2.4" fill="#dceaa0" opacity="0.6"/><circle cx="7.0" cy="17.0" r="2.4" fill="#dceaa0" opacity="0.6"/><circle cx="8.5" cy="11.5" r="2.4" fill="#dceaa0" opacity="0.6"/><circle cx="12.5" cy="7.5" r="2.4" fill="#dceaa0" opacity="0.6"/><circle cx="18.0" cy="6.0" r="2.4" fill="#dceaa0" opacity="0.6"/><circle cx="23.5" cy="7.5" r="2.4" fill="#dceaa0" opacity="0.6"/><circle cx="27.5" cy="11.5" r="2.4" fill="#dceaa0" opacity="0.6"/></svg>
  <div class="a pe" style="left:237px;top:421px">PULSE<span style="font-size:3px">of</span>EUROPE</div>
  <div class="a ph" style="left:195.8px;top:440.3px;width:91.2px;height:65.7px;background:#0a0814">
    <div class="a" style="left:0;top:0;width:92px;height:66px;filter:blur(0.7px)">
    <div class="a" style="left:0;top:20px;width:12px;height:46px;background:linear-gradient(180deg,#140e30,#201860)"></div>
    <div class="a" style="left:8px;top:22px;width:22px;height:44px;background:linear-gradient(180deg,#3a28c8,#3424d0 60%,#2818a0)"></div>
    <div class="a" style="left:15px;top:4px;width:14px;height:11px;border-radius:5px 5px 1px 1px;background:#3a30c0"></div>
    <div class="a" style="left:18px;top:7px;width:8px;height:2px;background:#c8c8f8"></div>
    <div class="a" style="left:14px;top:14px;width:16px;height:10px;background:#2a2090"></div>
    <div class="a" style="left:18px;top:16px;width:5px;height:8px;border-radius:2px;background:#e8d8a8"></div>
    <div class="a" style="left:14px;top:31px;width:5px;height:11px;background:#e8e0f0"></div>
    <div class="a" style="left:28px;top:25px;width:52px;height:41px;border-radius:26px 26px 0 0;background:linear-gradient(180deg,#2c20a8,#3828c0)"></div>
    <div class="a" style="left:28px;top:25px;width:52px;height:12px;border-radius:26px 26px 0 0;border:1.5px solid #a8a0e8;border-bottom:none"></div>
    <div class="a" style="left:43px;top:26px;width:21px;height:21px;border-radius:11px;border:2px dotted #70d8b0"></div>
    <div class="a" style="left:31px;top:42px;width:32px;height:24px;background:repeating-linear-gradient(90deg,#d8c0e8 0 2.5px,#3020b0 2.5px 8px)"></div>
    <div class="a" style="left:66px;top:30px;width:25px;height:26px;background:#3424c8"></div>
    <div class="a" style="left:77px;top:35px;width:6px;height:6px;background:#e0d8f8"></div>
    <div class="a" style="left:56px;top:46px;width:35px;height:20px;border-radius:10px 10px 0 0;background:#1a1440"></div>
    <div class="a" style="left:82px;top:50px;width:6px;height:10px;background:#d0c8e8"></div>
    </div>
  </div>
  <div class="de b" style="left:44.4px;top:485.8px;font-size:8.55px;color:#2a3a78">Pulse of Europe</div>
  <div class="de" style="left:44.4px;top:497px;font-size:8.55px;color:#2c4490">Zeichen setzen für die Zukunft Europas</div>
  <div class="a ph" style="left:47.1px;top:523.8px;width:99.4px;height:43.4px;background:linear-gradient(90deg,#2c3890 0%,#2e3888 40%,#34306a 65%,#3c2c50 85%,#4a2c40 100%)">
    <svg class="a" style="left:0;top:0" width="99.4" height="43.4"><rect x="45.0" y="24.3" width="1.3" height="1.3" fill="#5a70e0"/><rect x="44.9" y="37.1" width="1.3" height="1.3" fill="#4a60d0"/><rect x="18.4" y="22.2" width="1.3" height="1.3" fill="#c8c0e8"/><rect x="9.4" y="13.2" width="1.3" height="1.3" fill="#8aa0ff"/><rect x="53.5" y="38.6" width="1.3" height="1.3" fill="#a890b0"/><rect x="4.2" y="42.6" width="1.3" height="1.3" fill="#5a70e0"/><rect x="65.0" y="26.7" width="1.3" height="1.3" fill="#e0c8e0"/><rect x="61.9" y="36.1" width="1.3" height="1.3" fill="#c8b0d8"/><rect x="5.9" y="8.3" width="1.3" height="1.3" fill="#4a60d0"/><rect x="59.6" y="33.8" width="1.3" height="1.3" fill="#3a2850"/><rect x="43.8" y="36.6" width="1.3" height="1.3" fill="#4a60d0"/><rect x="63.6" y="21.7" width="1.3" height="1.3" fill="#a890b0"/><rect x="8.4" y="28.4" width="1.3" height="1.3" fill="#a0a8f0"/><rect x="99.2" y="43.2" width="1.3" height="1.3" fill="#502838"/><rect x="8.3" y="11.0" width="1.3" height="1.3" fill="#4a60d0"/><rect x="51.0" y="1.3" width="1.3" height="1.3" fill="#7a90e8"/><rect x="76.2" y="17.4" width="1.3" height="1.3" fill="#502838"/><rect x="28.9" y="2.9" width="1.3" height="1.3" fill="#6a80f0"/><rect x="84.2" y="0.0" width="1.3" height="1.3" fill="#e0c8d0"/><rect x="92.1" y="2.3" width="1.3" height="1.3" fill="#1a1420"/><rect x="97.4" y="17.2" width="1.3" height="1.3" fill="#c8a8b8"/><rect x="56.3" y="8.6" width="1.3" height="1.3" fill="#a890b0"/><rect x="26.8" y="3.8" width="1.3" height="1.3" fill="#2a3080"/><rect x="1.5" y="17.8" width="1.3" height="1.3" fill="#8aa0ff"/><rect x="13.4" y="30.7" width="1.3" height="1.3" fill="#6a80f0"/><rect x="6.0" y="34.6" width="1.3" height="1.3" fill="#c8c0e8"/><rect x="67.8" y="8.2" width="1.3" height="1.3" fill="#7a90e8"/><rect x="19.0" y="31.8" width="1.3" height="1.3" fill="#c8c0e8"/><rect x="41.7" y="16.7" width="1.3" height="1.3" fill="#a0a8f0"/><rect x="41.8" y="9.2" width="1.3" height="1.3" fill="#1a1c4a"/><rect x="85.9" y="42.3" width="1.3" height="1.3" fill="#8a6878"/><rect x="30.2" y="38.4" width="1.3" height="1.3" fill="#4a60d0"/><rect x="18.6" y="43.2" width="1.3" height="1.3" fill="#8aa0ff"/><rect x="4.2" y="6.4" width="1.3" height="1.3" fill="#5a70e0"/><rect x="25.7" y="33.5" width="1.3" height="1.3" fill="#2a3080"/><rect x="82.5" y="16.8" width="1.3" height="1.3" fill="#c8a8b8"/><rect x="9.0" y="25.3" width="1.3" height="1.3" fill="#4a60d0"/><rect x="1.5" y="16.0" width="1.3" height="1.3" fill="#5a70e0"/><rect x="12.6" y="25.5" width="1.3" height="1.3" fill="#c8c0e8"/><rect x="86.1" y="7.9" width="1.3" height="1.3" fill="#e0c8d0"/><rect x="30.9" y="9.9" width="1.3" height="1.3" fill="#4a60d0"/><rect x="72.1" y="6.9" width="1.3" height="1.3" fill="#a890b0"/><rect x="93.5" y="8.5" width="1.3" height="1.3" fill="#1a1420"/><rect x="87.7" y="26.2" width="1.3" height="1.3" fill="#1a1420"/><rect x="4.7" y="4.7" width="1.3" height="1.3" fill="#1a1c4a"/><rect x="23.7" y="30.6" width="1.3" height="1.3" fill="#1a1c4a"/><rect x="41.8" y="39.3" width="1.3" height="1.3" fill="#5a70e0"/><rect x="29.2" y="7.6" width="1.3" height="1.3" fill="#8aa0ff"/><rect x="12.6" y="20.8" width="1.3" height="1.3" fill="#8aa0ff"/><rect x="27.9" y="39.8" width="1.3" height="1.3" fill="#4a60d0"/><rect x="74.4" y="3.0" width="1.3" height="1.3" fill="#1a1838"/><rect x="44.3" y="2.6" width="1.3" height="1.3" fill="#c8c0e8"/><rect x="28.0" y="23.0" width="1.3" height="1.3" fill="#c8c0e8"/><rect x="9.2" y="6.0" width="1.3" height="1.3" fill="#5a70e0"/><rect x="97.5" y="28.5" width="1.3" height="1.3" fill="#a88898"/><rect x="51.9" y="41.1" width="1.3" height="1.3" fill="#7a90e8"/><rect x="3.5" y="0.8" width="1.3" height="1.3" fill="#2a3080"/><rect x="69.7" y="41.8" width="1.3" height="1.3" fill="#c8b0d8"/><rect x="59.5" y="3.2" width="1.3" height="1.3" fill="#c8b0d8"/><rect x="72.6" y="13.8" width="1.3" height="1.3" fill="#c8b0d8"/><rect x="7.5" y="23.7" width="1.3" height="1.3" fill="#6a80f0"/><rect x="89.5" y="32.0" width="1.3" height="1.3" fill="#a88898"/><rect x="12.9" y="41.8" width="1.3" height="1.3" fill="#2a3080"/><rect x="35.0" y="29.7" width="1.3" height="1.3" fill="#8aa0ff"/><rect x="86.6" y="18.1" width="1.3" height="1.3" fill="#502838"/><rect x="3.0" y="21.7" width="1.3" height="1.3" fill="#6a80f0"/><rect x="62.1" y="16.6" width="1.3" height="1.3" fill="#7a90e8"/><rect x="1.2" y="3.1" width="1.3" height="1.3" fill="#8aa0ff"/><rect x="63.6" y="43.1" width="1.3" height="1.3" fill="#1a1838"/><rect x="72.4" y="16.9" width="1.3" height="1.3" fill="#a890b0"/><rect x="69.0" y="19.9" width="1.3" height="1.3" fill="#1a1838"/><rect x="83.3" y="3.6" width="1.3" height="1.3" fill="#502838"/><rect x="51.1" y="13.5" width="1.3" height="1.3" fill="#c8b0d8"/><rect x="47.8" y="10.0" width="1.3" height="1.3" fill="#a890b0"/><rect x="11.2" y="33.8" width="1.3" height="1.3" fill="#5a70e0"/><rect x="25.4" y="0.5" width="1.3" height="1.3" fill="#1a1c4a"/><rect x="14.2" y="26.6" width="1.3" height="1.3" fill="#c8c0e8"/><rect x="74.9" y="14.9" width="1.3" height="1.3" fill="#1a1838"/><rect x="49.5" y="10.5" width="1.3" height="1.3" fill="#1a1838"/><rect x="66.2" y="8.6" width="1.3" height="1.3" fill="#1a1838"/><rect x="79.9" y="32.8" width="1.3" height="1.3" fill="#e0c8d0"/><rect x="87.5" y="16.7" width="1.3" height="1.3" fill="#8a6878"/><rect x="91.5" y="9.1" width="1.3" height="1.3" fill="#e0c8d0"/><rect x="49.3" y="36.3" width="1.3" height="1.3" fill="#4a50a0"/><rect x="4.0" y="2.8" width="1.3" height="1.3" fill="#1a1c4a"/><rect x="81.7" y="4.9" width="1.3" height="1.3" fill="#1a1420"/><rect x="27.4" y="9.3" width="1.3" height="1.3" fill="#a0a8f0"/><rect x="38.0" y="22.6" width="1.3" height="1.3" fill="#2a3080"/><rect x="71.2" y="36.5" width="1.3" height="1.3" fill="#7a90e8"/><rect x="45.0" y="3.2" width="1.3" height="1.3" fill="#6a80f0"/><rect x="27.6" y="26.4" width="1.3" height="1.3" fill="#1a1c4a"/><rect x="56.7" y="13.4" width="1.3" height="1.3" fill="#4a50a0"/><rect x="56.1" y="27.8" width="1.3" height="1.3" fill="#1a1838"/><rect x="45.2" y="1.1" width="1.3" height="1.3" fill="#4a50a0"/><rect x="26.5" y="33.8" width="1.3" height="1.3" fill="#6a80f0"/><rect x="97.8" y="5.0" width="1.3" height="1.3" fill="#c8a8b8"/><rect x="62.6" y="28.4" width="1.3" height="1.3" fill="#4a50a0"/><rect x="36.6" y="3.4" width="1.3" height="1.3" fill="#4a60d0"/><rect x="19.8" y="20.6" width="1.3" height="1.3" fill="#c8c0e8"/><rect x="71.0" y="32.8" width="1.3" height="1.3" fill="#7a90e8"/><rect x="71.0" y="7.8" width="1.3" height="1.3" fill="#3a2850"/><rect x="77.4" y="23.4" width="1.3" height="1.3" fill="#8a6878"/><rect x="49.7" y="43.3" width="1.3" height="1.3" fill="#e0c8e0"/><rect x="39.1" y="34.4" width="1.3" height="1.3" fill="#4a60d0"/><rect x="8.7" y="40.5" width="1.3" height="1.3" fill="#a0a8f0"/><rect x="12.9" y="19.7" width="1.3" height="1.3" fill="#6a80f0"/><rect x="37.5" y="24.7" width="1.3" height="1.3" fill="#2a3080"/><rect x="46.1" y="28.3" width="1.3" height="1.3" fill="#e0c8e0"/><rect x="9.8" y="37.6" width="1.3" height="1.3" fill="#8aa0ff"/><rect x="21.2" y="39.1" width="1.3" height="1.3" fill="#8aa0ff"/><rect x="97.1" y="23.3" width="1.3" height="1.3" fill="#502838"/><rect x="92.7" y="11.4" width="1.3" height="1.3" fill="#a88898"/><rect x="85.1" y="15.1" width="1.3" height="1.3" fill="#c8a8b8"/><rect x="3.7" y="14.8" width="1.3" height="1.3" fill="#a0a8f0"/><rect x="76.4" y="21.2" width="1.3" height="1.3" fill="#c8a8b8"/><rect x="21.7" y="37.7" width="1.3" height="1.3" fill="#a0a8f0"/><rect x="79.5" y="7.5" width="1.3" height="1.3" fill="#4a2838"/><rect x="68.2" y="39.8" width="1.3" height="1.3" fill="#1a1838"/><rect x="14.8" y="22.4" width="1.3" height="1.3" fill="#5a70e0"/><rect x="94.0" y="21.4" width="1.3" height="1.3" fill="#a88898"/><rect x="8.6" y="9.6" width="1.3" height="1.3" fill="#1a1c4a"/><rect x="82.6" y="24.4" width="1.3" height="1.3" fill="#e0c8d0"/><rect x="52.0" y="36.6" width="1.3" height="1.3" fill="#7a90e8"/><rect x="25.5" y="29.1" width="1.3" height="1.3" fill="#4a60d0"/><rect x="30.3" y="6.1" width="1.3" height="1.3" fill="#1a1c4a"/><rect x="57.0" y="8.7" width="1.3" height="1.3" fill="#7a90e8"/><rect x="11.4" y="0.2" width="1.3" height="1.3" fill="#a0a8f0"/><rect x="2.8" y="42.1" width="1.3" height="1.3" fill="#a0a8f0"/><rect x="54.1" y="42.9" width="1.3" height="1.3" fill="#c8b0d8"/><rect x="48.8" y="30.0" width="1.3" height="1.3" fill="#c8b0d8"/><rect x="92.5" y="19.9" width="1.3" height="1.3" fill="#502838"/><rect x="91.8" y="11.7" width="1.3" height="1.3" fill="#1a1420"/><rect x="49.0" y="14.7" width="1.3" height="1.3" fill="#4a50a0"/><rect x="93.0" y="39.9" width="1.3" height="1.3" fill="#8a6878"/><rect x="31.5" y="8.3" width="1.3" height="1.3" fill="#6a80f0"/><rect x="92.0" y="5.6" width="1.3" height="1.3" fill="#502838"/><rect x="97.1" y="1.5" width="1.3" height="1.3" fill="#e0c8d0"/><rect x="22.6" y="29.8" width="1.3" height="1.3" fill="#2a3080"/><rect x="71.9" y="10.6" width="1.3" height="1.3" fill="#1a1838"/><rect x="10.4" y="31.7" width="1.3" height="1.3" fill="#8aa0ff"/><rect x="84.7" y="27.1" width="1.3" height="1.3" fill="#a88898"/><rect x="19.7" y="23.0" width="1.3" height="1.3" fill="#a0a8f0"/><rect x="2.3" y="27.5" width="1.3" height="1.3" fill="#c8c0e8"/><rect x="53.5" y="37.5" width="1.3" height="1.3" fill="#7a90e8"/><rect x="63.5" y="23.0" width="1.3" height="1.3" fill="#4a50a0"/><rect x="54.0" y="25.5" width="1.3" height="1.3" fill="#e0c8e0"/><rect x="23.1" y="32.1" width="1.3" height="1.3" fill="#2a3080"/><rect x="89.7" y="13.7" width="1.3" height="1.3" fill="#4a2838"/><rect x="88.5" y="8.4" width="1.3" height="1.3" fill="#502838"/><rect x="99.2" y="38.5" width="1.3" height="1.3" fill="#e0c8d0"/><rect x="88.4" y="5.8" width="1.3" height="1.3" fill="#c8a8b8"/><rect x="25.8" y="4.2" width="1.3" height="1.3" fill="#a0a8f0"/><rect x="54.0" y="30.6" width="1.3" height="1.3" fill="#e0c8e0"/><rect x="40.0" y="29.7" width="1.3" height="1.3" fill="#6a80f0"/><rect x="9.5" y="24.7" width="1.3" height="1.3" fill="#2a3080"/><rect x="90.6" y="42.0" width="1.3" height="1.3" fill="#c8a8b8"/><rect x="70.0" y="27.5" width="1.3" height="1.3" fill="#3a2850"/><rect x="50.0" y="29.8" width="1.3" height="1.3" fill="#e0c8e0"/><rect x="79.8" y="20.9" width="1.3" height="1.3" fill="#c8a8b8"/><rect x="3.7" y="23.9" width="1.3" height="1.3" fill="#5a70e0"/><rect x="14.6" y="8.0" width="1.3" height="1.3" fill="#4a60d0"/><rect x="17.1" y="6.9" width="1.3" height="1.3" fill="#1a1c4a"/><rect x="92.1" y="4.1" width="1.3" height="1.3" fill="#c8a8b8"/><rect x="13.4" y="29.6" width="1.3" height="1.3" fill="#8aa0ff"/><rect x="76.0" y="14.2" width="1.3" height="1.3" fill="#1a1420"/><rect x="42.4" y="15.4" width="1.3" height="1.3" fill="#4a60d0"/><rect x="59.7" y="0.6" width="1.3" height="1.3" fill="#a890b0"/><rect x="4.1" y="8.7" width="1.3" height="1.3" fill="#a0a8f0"/><rect x="45.1" y="32.1" width="1.3" height="1.3" fill="#1a1838"/><rect x="91.6" y="26.3" width="1.3" height="1.3" fill="#c8a8b8"/><rect x="50.9" y="0.7" width="1.3" height="1.3" fill="#c8b0d8"/><rect x="79.7" y="30.6" width="1.3" height="1.3" fill="#502838"/><rect x="90.3" y="40.8" width="1.3" height="1.3" fill="#8a6878"/><rect x="59.6" y="21.9" width="1.3" height="1.3" fill="#3a2850"/><rect x="80.0" y="11.2" width="1.3" height="1.3" fill="#c8a8b8"/><rect x="74.0" y="33.8" width="1.3" height="1.3" fill="#4a50a0"/><rect x="92.8" y="5.8" width="1.3" height="1.3" fill="#4a2838"/><rect x="87.5" y="30.2" width="1.3" height="1.3" fill="#502838"/><rect x="42.9" y="7.9" width="1.3" height="1.3" fill="#4a60d0"/><rect x="71.8" y="3.1" width="1.3" height="1.3" fill="#3a2850"/><rect x="30.0" y="4.4" width="1.3" height="1.3" fill="#2a3080"/><rect x="98.5" y="39.2" width="1.3" height="1.3" fill="#c8a8b8"/><rect x="23.1" y="41.0" width="1.3" height="1.3" fill="#1a1c4a"/><rect x="33.6" y="28.6" width="1.3" height="1.3" fill="#c8c0e8"/><rect x="53.0" y="16.9" width="1.3" height="1.3" fill="#1a1838"/><rect x="63.8" y="30.4" width="1.3" height="1.3" fill="#4a50a0"/><rect x="39.3" y="25.0" width="1.3" height="1.3" fill="#8aa0ff"/><rect x="61.2" y="32.1" width="1.3" height="1.3" fill="#3a2850"/><rect x="44.1" y="21.9" width="1.3" height="1.3" fill="#4a60d0"/><rect x="64.4" y="0.5" width="1.3" height="1.3" fill="#3a2850"/><rect x="24.9" y="39.3" width="1.3" height="1.3" fill="#a0a8f0"/><rect x="96.1" y="24.7" width="1.3" height="1.3" fill="#c8a8b8"/><rect x="63.4" y="35.1" width="1.3" height="1.3" fill="#c8b0d8"/><rect x="54.6" y="29.0" width="1.3" height="1.3" fill="#c8b0d8"/><rect x="38.4" y="40.7" width="1.3" height="1.3" fill="#a0a8f0"/><rect x="46.9" y="7.3" width="1.3" height="1.3" fill="#1a1838"/><rect x="53.9" y="25.9" width="1.3" height="1.3" fill="#1a1838"/><rect x="94.0" y="18.3" width="1.3" height="1.3" fill="#8a6878"/><rect x="39.6" y="13.6" width="1.3" height="1.3" fill="#1a1c4a"/><rect x="48.0" y="11.7" width="1.3" height="1.3" fill="#3a2850"/><rect x="66.0" y="32.5" width="1.3" height="1.3" fill="#c8b0d8"/><rect x="1.4" y="10.6" width="1.3" height="1.3" fill="#6a80f0"/><rect x="62.9" y="17.7" width="1.3" height="1.3" fill="#a890b0"/><rect x="38.8" y="39.0" width="1.3" height="1.3" fill="#a0a8f0"/><rect x="5.0" y="42.9" width="1.3" height="1.3" fill="#2a3080"/><rect x="7.3" y="39.3" width="1.3" height="1.3" fill="#a0a8f0"/><rect x="71.5" y="10.9" width="1.3" height="1.3" fill="#4a50a0"/><rect x="24.2" y="22.7" width="1.3" height="1.3" fill="#5a70e0"/><rect x="14.3" y="41.7" width="1.3" height="1.3" fill="#4a60d0"/><rect x="60.0" y="5.0" width="1.3" height="1.3" fill="#7a90e8"/><rect x="41.5" y="5.1" width="1.3" height="1.3" fill="#6a80f0"/><rect x="35.5" y="6.7" width="1.3" height="1.3" fill="#2a3080"/><rect x="44.0" y="29.0" width="1.3" height="1.3" fill="#5a70e0"/><rect x="59.7" y="27.8" width="1.3" height="1.3" fill="#a890b0"/><rect x="41.7" y="33.8" width="1.3" height="1.3" fill="#c8c0e8"/><rect x="94.7" y="31.9" width="1.3" height="1.3" fill="#e0c8d0"/><rect x="47.8" y="21.8" width="1.3" height="1.3" fill="#3a2850"/><rect x="78.0" y="27.1" width="1.3" height="1.3" fill="#4a2838"/><rect x="27.3" y="26.5" width="1.3" height="1.3" fill="#4a60d0"/><rect x="62.9" y="32.7" width="1.3" height="1.3" fill="#e0c8e0"/><rect x="94.6" y="21.8" width="1.3" height="1.3" fill="#a88898"/><rect x="91.0" y="38.1" width="1.3" height="1.3" fill="#c8a8b8"/><rect x="62.5" y="0.4" width="1.3" height="1.3" fill="#3a2850"/><rect x="42.3" y="27.1" width="1.3" height="1.3" fill="#8aa0ff"/><rect x="22.1" y="12.1" width="1.3" height="1.3" fill="#8aa0ff"/><rect x="90.7" y="7.0" width="1.3" height="1.3" fill="#e0c8d0"/><rect x="62.7" y="16.2" width="1.3" height="1.3" fill="#1a1838"/><rect x="35.2" y="14.7" width="1.3" height="1.3" fill="#5a70e0"/><rect x="74.0" y="36.4" width="1.3" height="1.3" fill="#c8b0d8"/><rect x="79.7" y="19.4" width="1.3" height="1.3" fill="#502838"/><rect x="62.0" y="33.4" width="1.3" height="1.3" fill="#e0c8e0"/><rect x="44.2" y="32.4" width="1.3" height="1.3" fill="#a0a8f0"/><rect x="80.5" y="16.0" width="1.3" height="1.3" fill="#a88898"/><rect x="83.1" y="25.9" width="1.3" height="1.3" fill="#4a2838"/><rect x="54.5" y="32.4" width="1.3" height="1.3" fill="#e0c8e0"/><rect x="42.5" y="16.0" width="1.3" height="1.3" fill="#8aa0ff"/><rect x="45.9" y="14.1" width="1.3" height="1.3" fill="#7a90e8"/><rect x="8.3" y="24.5" width="1.3" height="1.3" fill="#5a70e0"/><rect x="81.0" y="20.1" width="1.3" height="1.3" fill="#502838"/><rect x="77.1" y="3.3" width="1.3" height="1.3" fill="#e0c8d0"/><rect x="90.5" y="26.2" width="1.3" height="1.3" fill="#a88898"/><rect x="30.2" y="31.5" width="1.3" height="1.3" fill="#2a3080"/><rect x="28.1" y="6.2" width="1.3" height="1.3" fill="#2a3080"/><rect x="65.3" y="14.2" width="1.3" height="1.3" fill="#c8b0d8"/><rect x="32.1" y="19.1" width="1.3" height="1.3" fill="#1a1c4a"/><rect x="43.5" y="34.9" width="1.3" height="1.3" fill="#1a1c4a"/><rect x="45.6" y="9.6" width="1.3" height="1.3" fill="#a890b0"/><rect x="88.9" y="10.8" width="1.3" height="1.3" fill="#4a2838"/><rect x="82.4" y="1.0" width="1.3" height="1.3" fill="#a88898"/><rect x="39.3" y="16.8" width="1.3" height="1.3" fill="#4a60d0"/><rect x="73.4" y="16.0" width="1.3" height="1.3" fill="#1a1838"/><rect x="53.7" y="36.3" width="1.3" height="1.3" fill="#7a90e8"/><rect x="17.6" y="3.9" width="1.3" height="1.3" fill="#5a70e0"/><rect x="87.6" y="12.2" width="1.3" height="1.3" fill="#c8a8b8"/><rect x="22.0" y="2.5" width="1.3" height="1.3" fill="#c8c0e8"/><rect x="56.4" y="41.9" width="1.3" height="1.3" fill="#a890b0"/><rect x="83.7" y="18.3" width="1.3" height="1.3" fill="#8a6878"/><rect x="54.4" y="34.2" width="1.3" height="1.3" fill="#c8b0d8"/><rect x="33.3" y="11.9" width="1.3" height="1.3" fill="#8aa0ff"/><rect x="89.4" y="3.7" width="1.3" height="1.3" fill="#a88898"/><rect x="65.0" y="4.2" width="1.3" height="1.3" fill="#4a50a0"/><rect x="64.5" y="10.7" width="1.3" height="1.3" fill="#e0c8e0"/><rect x="48.6" y="39.4" width="1.3" height="1.3" fill="#3a2850"/><rect x="76.0" y="17.1" width="1.3" height="1.3" fill="#4a2838"/><rect x="80.2" y="14.5" width="1.3" height="1.3" fill="#e0c8d0"/><rect x="49.1" y="23.3" width="1.3" height="1.3" fill="#a890b0"/><rect x="7.2" y="26.8" width="1.3" height="1.3" fill="#6a80f0"/><rect x="40.8" y="35.9" width="1.3" height="1.3" fill="#2a3080"/><rect x="84.8" y="35.0" width="1.3" height="1.3" fill="#502838"/><rect x="8.9" y="20.2" width="1.3" height="1.3" fill="#6a80f0"/><rect x="52.1" y="30.8" width="1.3" height="1.3" fill="#4a50a0"/><rect x="10.9" y="40.1" width="1.3" height="1.3" fill="#c8c0e8"/><rect x="24.4" y="7.0" width="1.3" height="1.3" fill="#a0a8f0"/><rect x="68.0" y="13.9" width="1.3" height="1.3" fill="#1a1838"/><rect x="42.2" y="12.7" width="1.3" height="1.3" fill="#6a80f0"/><rect x="46.9" y="31.7" width="1.3" height="1.3" fill="#3a2850"/><rect x="64.4" y="33.7" width="1.3" height="1.3" fill="#e0c8e0"/><rect x="90.7" y="32.7" width="1.3" height="1.3" fill="#c8a8b8"/><rect x="58.1" y="39.5" width="1.3" height="1.3" fill="#c8b0d8"/><rect x="31.1" y="8.6" width="1.3" height="1.3" fill="#2a3080"/><rect x="21.6" y="10.2" width="1.3" height="1.3" fill="#5a70e0"/><rect x="59.1" y="9.7" width="1.3" height="1.3" fill="#e0c8e0"/><rect x="88.9" y="17.5" width="1.3" height="1.3" fill="#502838"/><rect x="93.2" y="27.2" width="1.3" height="1.3" fill="#502838"/><rect x="54.7" y="37.0" width="1.3" height="1.3" fill="#1a1838"/><rect x="88.2" y="39.7" width="1.3" height="1.3" fill="#4a2838"/><rect x="65.6" y="33.5" width="1.3" height="1.3" fill="#c8b0d8"/><rect x="48.0" y="9.6" width="1.3" height="1.3" fill="#c8b0d8"/><rect x="21.6" y="5.8" width="1.3" height="1.3" fill="#a0a8f0"/><rect x="97.0" y="34.5" width="1.3" height="1.3" fill="#502838"/><rect x="27.3" y="43.0" width="1.3" height="1.3" fill="#4a60d0"/><rect x="88.7" y="37.9" width="1.3" height="1.3" fill="#4a2838"/><rect x="44.7" y="10.7" width="1.3" height="1.3" fill="#a0a8f0"/><rect x="60.2" y="6.8" width="1.3" height="1.3" fill="#e0c8e0"/><rect x="76.7" y="6.3" width="1.3" height="1.3" fill="#502838"/><rect x="80.5" y="5.7" width="1.3" height="1.3" fill="#a88898"/><rect x="98.7" y="11.6" width="1.3" height="1.3" fill="#8a6878"/><rect x="5.3" y="24.8" width="1.3" height="1.3" fill="#c8c0e8"/><rect x="0.1" y="35.6" width="1.3" height="1.3" fill="#c8c0e8"/><rect x="81.7" y="3.6" width="1.3" height="1.3" fill="#4a2838"/><rect x="61.1" y="22.9" width="1.3" height="1.3" fill="#1a1838"/><rect x="69.0" y="3.6" width="1.3" height="1.3" fill="#a890b0"/><rect x="58.3" y="37.2" width="1.3" height="1.3" fill="#3a2850"/><rect x="1.9" y="8.1" width="1.3" height="1.3" fill="#4a60d0"/><rect x="91.1" y="3.9" width="1.3" height="1.3" fill="#502838"/><rect x="43.8" y="1.6" width="1.3" height="1.3" fill="#a0a8f0"/><rect x="52.3" y="6.8" width="1.3" height="1.3" fill="#4a50a0"/><rect x="95.8" y="13.7" width="1.3" height="1.3" fill="#1a1420"/><rect x="7.6" y="13.3" width="1.3" height="1.3" fill="#5a70e0"/><rect x="66.3" y="2.9" width="1.3" height="1.3" fill="#c8b0d8"/><rect x="68.3" y="4.6" width="1.3" height="1.3" fill="#1a1838"/><rect x="67.2" y="32.4" width="1.3" height="1.3" fill="#4a50a0"/><rect x="82.5" y="28.4" width="1.3" height="1.3" fill="#c8a8b8"/><rect x="85.8" y="30.9" width="1.3" height="1.3" fill="#1a1420"/><rect x="23.6" y="24.5" width="1.3" height="1.3" fill="#5a70e0"/><rect x="76.7" y="37.2" width="1.3" height="1.3" fill="#502838"/><rect x="79.5" y="9.0" width="1.3" height="1.3" fill="#8a6878"/><rect x="15.1" y="27.2" width="1.3" height="1.3" fill="#1a1c4a"/><rect x="94.8" y="32.8" width="1.3" height="1.3" fill="#8a6878"/><rect x="66.3" y="11.1" width="1.3" height="1.3" fill="#e0c8e0"/><rect x="37.4" y="4.8" width="1.3" height="1.3" fill="#1a1c4a"/><rect x="93.9" y="24.4" width="1.3" height="1.3" fill="#a88898"/><rect x="63.6" y="19.4" width="1.3" height="1.3" fill="#1a1838"/><rect x="9.2" y="6.1" width="1.3" height="1.3" fill="#8aa0ff"/><rect x="13.1" y="27.4" width="1.3" height="1.3" fill="#c8c0e8"/><rect x="17.9" y="17.5" width="1.3" height="1.3" fill="#5a70e0"/><rect x="58.9" y="3.9" width="1.3" height="1.3" fill="#e0c8e0"/><rect x="3.2" y="42.9" width="1.3" height="1.3" fill="#a0a8f0"/><rect x="40.4" y="3.2" width="1.3" height="1.3" fill="#a0a8f0"/><rect x="92.1" y="6.0" width="1.3" height="1.3" fill="#e0c8d0"/><rect x="76.2" y="35.6" width="1.3" height="1.3" fill="#1a1420"/><rect x="48.0" y="40.0" width="1.3" height="1.3" fill="#7a90e8"/><rect x="1.5" y="17.4" width="1.3" height="1.3" fill="#2a3080"/><rect x="97.6" y="34.3" width="1.3" height="1.3" fill="#a88898"/><rect x="98.0" y="23.0" width="1.3" height="1.3" fill="#4a2838"/><rect x="32.9" y="14.9" width="1.3" height="1.3" fill="#5a70e0"/><rect x="10.6" y="16.4" width="1.3" height="1.3" fill="#2a3080"/><rect x="78.4" y="35.8" width="1.3" height="1.3" fill="#8a6878"/><rect x="70.9" y="11.0" width="1.3" height="1.3" fill="#7a90e8"/><rect x="89.8" y="23.8" width="1.3" height="1.3" fill="#4a2838"/><rect x="60.8" y="22.3" width="1.3" height="1.3" fill="#7a90e8"/><rect x="70.9" y="42.8" width="1.3" height="1.3" fill="#7a90e8"/><rect x="99.2" y="30.7" width="1.3" height="1.3" fill="#e0c8d0"/><rect x="56.4" y="1.2" width="1.3" height="1.3" fill="#a890b0"/><rect x="19.7" y="3.6" width="1.3" height="1.3" fill="#4a60d0"/><rect x="47.5" y="18.1" width="1.3" height="1.3" fill="#3a2850"/><rect x="32.7" y="40.3" width="1.3" height="1.3" fill="#2a3080"/><rect x="26.5" y="38.3" width="1.3" height="1.3" fill="#5a70e0"/><rect x="96.8" y="5.9" width="1.3" height="1.3" fill="#8a6878"/><rect x="54.0" y="24.3" width="1.3" height="1.3" fill="#7a90e8"/><rect x="91.0" y="7.3" width="1.3" height="1.3" fill="#a88898"/><rect x="98.6" y="35.5" width="1.3" height="1.3" fill="#8a6878"/><rect x="14.5" y="40.5" width="1.3" height="1.3" fill="#6a80f0"/><rect x="28.7" y="38.9" width="1.3" height="1.3" fill="#4a60d0"/><rect x="75.4" y="15.8" width="1.3" height="1.3" fill="#e0c8d0"/><rect x="18.4" y="23.8" width="1.3" height="1.3" fill="#8aa0ff"/><rect x="45.2" y="17.5" width="1.3" height="1.3" fill="#4a50a0"/><rect x="98.1" y="40.8" width="1.3" height="1.3" fill="#a88898"/><rect x="13.7" y="32.8" width="1.3" height="1.3" fill="#a0a8f0"/><rect x="61.2" y="27.8" width="1.3" height="1.3" fill="#4a50a0"/><rect x="1.6" y="8.7" width="1.3" height="1.3" fill="#5a70e0"/><rect x="3.3" y="22.9" width="1.3" height="1.3" fill="#8aa0ff"/><rect x="56.6" y="7.5" width="1.3" height="1.3" fill="#7a90e8"/><rect x="13.1" y="10.6" width="1.3" height="1.3" fill="#2a3080"/><rect x="5.3" y="34.0" width="1.3" height="1.3" fill="#c8c0e8"/><rect x="40.1" y="21.6" width="1.3" height="1.3" fill="#8aa0ff"/><rect x="46.7" y="17.9" width="1.3" height="1.3" fill="#7a90e8"/><rect x="90.8" y="24.5" width="1.3" height="1.3" fill="#1a1420"/><rect x="74.7" y="21.1" width="1.3" height="1.3" fill="#1a1838"/><rect x="83.3" y="37.1" width="1.3" height="1.3" fill="#1a1420"/><rect x="82.0" y="5.1" width="1.3" height="1.3" fill="#c8a8b8"/><rect x="90.0" y="22.8" width="1.3" height="1.3" fill="#8a6878"/><rect x="51.8" y="18.2" width="1.3" height="1.3" fill="#c8b0d8"/><rect x="31.9" y="2.4" width="1.3" height="1.3" fill="#a0a8f0"/><rect x="72.8" y="25.9" width="1.3" height="1.3" fill="#4a50a0"/><rect x="78.5" y="38.3" width="1.3" height="1.3" fill="#c8a8b8"/><rect x="24.3" y="36.6" width="1.3" height="1.3" fill="#4a60d0"/><rect x="50.0" y="17.2" width="1.3" height="1.3" fill="#c8b0d8"/><rect x="47.3" y="4.6" width="1.3" height="1.3" fill="#e0c8e0"/><rect x="54.2" y="28.5" width="1.3" height="1.3" fill="#e0c8e0"/><rect x="87.4" y="43.4" width="1.3" height="1.3" fill="#a88898"/><rect x="96.1" y="28.9" width="1.3" height="1.3" fill="#502838"/><rect x="54.3" y="24.5" width="1.3" height="1.3" fill="#e0c8e0"/><rect x="22.0" y="32.4" width="1.3" height="1.3" fill="#8aa0ff"/><rect x="89.8" y="4.3" width="1.3" height="1.3" fill="#502838"/><rect x="12.9" y="38.3" width="1.3" height="1.3" fill="#5a70e0"/><rect x="0.1" y="10.6" width="1.3" height="1.3" fill="#1a1c4a"/><rect x="2.4" y="7.5" width="1.3" height="1.3" fill="#5a70e0"/><rect x="89.0" y="35.4" width="1.3" height="1.3" fill="#1a1420"/><rect x="14.0" y="30.0" width="1.3" height="1.3" fill="#4a60d0"/><rect x="4.6" y="1.4" width="1.3" height="1.3" fill="#2a3080"/><rect x="30.6" y="21.6" width="1.3" height="1.3" fill="#5a70e0"/><rect x="87.3" y="8.8" width="1.3" height="1.3" fill="#502838"/><rect x="91.7" y="38.9" width="1.3" height="1.3" fill="#e0c8d0"/><rect x="31.4" y="37.3" width="1.3" height="1.3" fill="#5a70e0"/><rect x="1.6" y="27.6" width="1.3" height="1.3" fill="#4a60d0"/><rect x="53.0" y="10.3" width="1.3" height="1.3" fill="#c8b0d8"/><rect x="64.6" y="13.3" width="1.3" height="1.3" fill="#4a50a0"/><rect x="31.1" y="39.1" width="1.3" height="1.3" fill="#a0a8f0"/><rect x="70.9" y="5.9" width="1.3" height="1.3" fill="#a890b0"/><rect x="95.1" y="33.8" width="1.3" height="1.3" fill="#1a1420"/><rect x="7.9" y="9.7" width="1.3" height="1.3" fill="#1a1c4a"/><rect x="12.0" y="30.0" width="1.3" height="1.3" fill="#1a1c4a"/><rect x="18.0" y="10.2" width="1.3" height="1.3" fill="#1a1c4a"/><rect x="78.6" y="16.2" width="1.3" height="1.3" fill="#a88898"/><rect x="52.1" y="5.0" width="1.3" height="1.3" fill="#7a90e8"/><rect x="22.8" y="13.1" width="1.3" height="1.3" fill="#c8c0e8"/><rect x="66.3" y="12.0" width="1.3" height="1.3" fill="#a890b0"/><rect x="66.4" y="20.1" width="1.3" height="1.3" fill="#c8b0d8"/><rect x="43.8" y="22.9" width="1.3" height="1.3" fill="#6a80f0"/><rect x="0.7" y="25.5" width="1.3" height="1.3" fill="#1a1c4a"/><rect x="42.1" y="24.7" width="1.3" height="1.3" fill="#c8c0e8"/><rect x="28.3" y="32.8" width="1.3" height="1.3" fill="#4a60d0"/><rect x="17.8" y="31.9" width="1.3" height="1.3" fill="#6a80f0"/><rect x="18.5" y="38.9" width="1.3" height="1.3" fill="#6a80f0"/><rect x="61.8" y="39.8" width="1.3" height="1.3" fill="#7a90e8"/><rect x="38.2" y="40.3" width="1.3" height="1.3" fill="#5a70e0"/><rect x="6.0" y="2.8" width="1.3" height="1.3" fill="#2a3080"/><rect x="31.9" y="21.0" width="1.3" height="1.3" fill="#6a80f0"/><rect x="51.4" y="21.9" width="1.3" height="1.3" fill="#4a50a0"/><rect x="63.1" y="42.7" width="1.3" height="1.3" fill="#a890b0"/><rect x="94.6" y="7.5" width="1.3" height="1.3" fill="#502838"/><rect x="76.7" y="4.9" width="1.3" height="1.3" fill="#1a1420"/><rect x="23.4" y="19.1" width="1.3" height="1.3" fill="#1a1c4a"/><rect x="78.2" y="34.3" width="1.3" height="1.3" fill="#e0c8d0"/><rect x="25.8" y="23.6" width="1.3" height="1.3" fill="#5a70e0"/><rect x="26.0" y="8.8" width="1.3" height="1.3" fill="#6a80f0"/><rect x="56.9" y="37.9" width="1.3" height="1.3" fill="#e0c8e0"/><rect x="32.3" y="26.4" width="1.3" height="1.3" fill="#5a70e0"/><rect x="80.1" y="21.9" width="1.3" height="1.3" fill="#a88898"/><rect x="26.1" y="34.7" width="1.3" height="1.3" fill="#8aa0ff"/><rect x="11.4" y="7.7" width="1.3" height="1.3" fill="#4a60d0"/><rect x="61.9" y="2.3" width="1.3" height="1.3" fill="#1a1838"/><rect x="4.2" y="13.6" width="1.3" height="1.3" fill="#1a1c4a"/><rect x="76.1" y="21.6" width="1.3" height="1.3" fill="#a88898"/><rect x="81.6" y="7.4" width="1.3" height="1.3" fill="#4a2838"/><rect x="24.7" y="21.6" width="1.3" height="1.3" fill="#5a70e0"/><rect x="6.1" y="17.8" width="1.3" height="1.3" fill="#2a3080"/><rect x="69.4" y="30.5" width="1.3" height="1.3" fill="#c8b0d8"/><rect x="12.8" y="32.8" width="1.3" height="1.3" fill="#c8c0e8"/><rect x="14.4" y="19.8" width="1.3" height="1.3" fill="#6a80f0"/><rect x="0.3" y="17.8" width="1.3" height="1.3" fill="#c8c0e8"/><rect x="9.1" y="24.1" width="1.3" height="1.3" fill="#5a70e0"/><rect x="42.2" y="3.3" width="1.3" height="1.3" fill="#6a80f0"/><rect x="67.6" y="31.1" width="1.3" height="1.3" fill="#a890b0"/><rect x="60.9" y="12.8" width="1.3" height="1.3" fill="#c8b0d8"/><rect x="54.9" y="10.5" width="1.3" height="1.3" fill="#1a1838"/><rect x="8.6" y="9.9" width="1.3" height="1.3" fill="#1a1c4a"/><rect x="33.5" y="42.6" width="1.3" height="1.3" fill="#4a60d0"/><rect x="3.9" y="17.5" width="1.3" height="1.3" fill="#6a80f0"/><rect x="73.3" y="24.6" width="1.3" height="1.3" fill="#4a50a0"/><rect x="87.9" y="40.1" width="1.3" height="1.3" fill="#e0c8d0"/><rect x="46.0" y="17.1" width="1.3" height="1.3" fill="#4a50a0"/><rect x="21.2" y="16.4" width="1.3" height="1.3" fill="#6a80f0"/><rect x="21.4" y="15.1" width="1.3" height="1.3" fill="#c8c0e8"/><rect x="78.9" y="34.9" width="1.3" height="1.3" fill="#1a1420"/><rect x="20.2" y="9.3" width="1.3" height="1.3" fill="#5a70e0"/><rect x="75.5" y="20.5" width="1.3" height="1.3" fill="#1a1420"/><rect x="98.7" y="29.5" width="1.3" height="1.3" fill="#502838"/><rect x="48.4" y="23.5" width="1.3" height="1.3" fill="#1a1838"/><rect x="7.2" y="30.0" width="1.3" height="1.3" fill="#2a3080"/><rect x="94.3" y="27.0" width="1.3" height="1.3" fill="#8a6878"/><rect x="18.1" y="11.4" width="1.3" height="1.3" fill="#a0a8f0"/><rect x="56.4" y="28.2" width="1.3" height="1.3" fill="#e0c8e0"/><rect x="26.7" y="15.7" width="1.3" height="1.3" fill="#c8c0e8"/><rect x="72.4" y="33.7" width="1.3" height="1.3" fill="#e0c8e0"/><rect x="76.1" y="31.4" width="1.3" height="1.3" fill="#c8a8b8"/><rect x="2.0" y="14.0" width="1.3" height="1.3" fill="#a0a8f0"/><rect x="44.7" y="37.1" width="1.3" height="1.3" fill="#a0a8f0"/><rect x="32.3" y="33.4" width="1.3" height="1.3" fill="#6a80f0"/><rect x="30.0" y="26.4" width="1.3" height="1.3" fill="#5a70e0"/><rect x="4.1" y="6.5" width="1.3" height="1.3" fill="#c8c0e8"/><rect x="3.2" y="13.6" width="1.3" height="1.3" fill="#a0a8f0"/><rect x="47.6" y="30.1" width="1.3" height="1.3" fill="#7a90e8"/><rect x="70.2" y="11.3" width="1.3" height="1.3" fill="#a890b0"/><rect x="44.9" y="16.4" width="1.3" height="1.3" fill="#4a60d0"/><rect x="83.0" y="23.2" width="1.3" height="1.3" fill="#1a1420"/><rect x="40.3" y="16.8" width="1.3" height="1.3" fill="#2a3080"/><rect x="22.5" y="12.7" width="1.3" height="1.3" fill="#2a3080"/><rect x="60.8" y="6.1" width="1.3" height="1.3" fill="#4a50a0"/><rect x="2.4" y="27.4" width="1.3" height="1.3" fill="#6a80f0"/><rect x="80.4" y="42.3" width="1.3" height="1.3" fill="#4a2838"/><rect x="65.6" y="2.9" width="1.3" height="1.3" fill="#4a50a0"/><rect x="21.5" y="29.9" width="1.3" height="1.3" fill="#8aa0ff"/><rect x="94.9" y="37.7" width="1.3" height="1.3" fill="#e0c8d0"/><rect x="77.9" y="11.3" width="1.3" height="1.3" fill="#502838"/><rect x="42.5" y="17.0" width="1.3" height="1.3" fill="#6a80f0"/><rect x="48.7" y="40.4" width="1.3" height="1.3" fill="#3a2850"/><rect x="49.4" y="12.1" width="1.3" height="1.3" fill="#e0c8e0"/><rect x="92.0" y="8.8" width="1.3" height="1.3" fill="#502838"/><rect x="16.6" y="28.9" width="1.3" height="1.3" fill="#4a60d0"/><rect x="51.7" y="32.2" width="1.3" height="1.3" fill="#1a1838"/><rect x="79.9" y="20.8" width="1.3" height="1.3" fill="#4a2838"/><rect x="69.7" y="24.0" width="1.3" height="1.3" fill="#a890b0"/><rect x="90.9" y="39.2" width="1.3" height="1.3" fill="#c8a8b8"/><rect x="36.2" y="2.7" width="1.3" height="1.3" fill="#a0a8f0"/><rect x="27.0" y="16.4" width="1.3" height="1.3" fill="#1a1c4a"/><rect x="46.6" y="14.1" width="1.3" height="1.3" fill="#3a2850"/><rect x="7.2" y="1.5" width="1.3" height="1.3" fill="#2a3080"/><rect x="88.6" y="24.6" width="1.3" height="1.3" fill="#4a2838"/><rect x="81.0" y="38.5" width="1.3" height="1.3" fill="#a88898"/><rect x="46.6" y="26.7" width="1.3" height="1.3" fill="#3a2850"/><rect x="3.1" y="30.7" width="1.3" height="1.3" fill="#4a60d0"/><rect x="76.7" y="27.2" width="1.3" height="1.3" fill="#8a6878"/><rect x="54.0" y="26.6" width="1.3" height="1.3" fill="#c8b0d8"/><rect x="27.5" y="36.0" width="1.3" height="1.3" fill="#5a70e0"/><rect x="38.0" y="39.5" width="1.3" height="1.3" fill="#6a80f0"/><rect x="79.9" y="29.7" width="1.3" height="1.3" fill="#4a2838"/><rect x="30.7" y="15.6" width="1.3" height="1.3" fill="#6a80f0"/><rect x="14.9" y="8.4" width="1.3" height="1.3" fill="#4a60d0"/><rect x="25.7" y="9.6" width="1.3" height="1.3" fill="#6a80f0"/><rect x="92.1" y="42.5" width="1.3" height="1.3" fill="#c8a8b8"/><rect x="23.8" y="21.4" width="1.3" height="1.3" fill="#8aa0ff"/><rect x="62.1" y="24.3" width="1.3" height="1.3" fill="#4a50a0"/><rect x="68.7" y="34.6" width="1.3" height="1.3" fill="#3a2850"/><rect x="34.5" y="38.5" width="1.3" height="1.3" fill="#2a3080"/><rect x="80.1" y="9.0" width="1.3" height="1.3" fill="#1a1420"/><rect x="68.2" y="41.8" width="1.3" height="1.3" fill="#4a50a0"/><rect x="16.0" y="14.5" width="1.3" height="1.3" fill="#5a70e0"/><rect x="80.0" y="12.7" width="1.3" height="1.3" fill="#1a1420"/><rect x="28.4" y="32.5" width="1.3" height="1.3" fill="#5a70e0"/><rect x="23.6" y="10.8" width="1.3" height="1.3" fill="#2a3080"/><rect x="70.2" y="39.8" width="1.3" height="1.3" fill="#a890b0"/><rect x="12.5" y="2.7" width="1.3" height="1.3" fill="#8aa0ff"/><rect x="81.3" y="38.4" width="1.3" height="1.3" fill="#4a2838"/><rect x="11.2" y="19.6" width="1.3" height="1.3" fill="#5a70e0"/><rect x="4.0" y="27.0" width="1.3" height="1.3" fill="#a0a8f0"/><rect x="86.5" y="2.3" width="1.3" height="1.3" fill="#4a2838"/><rect x="39.5" y="32.1" width="1.3" height="1.3" fill="#a0a8f0"/><rect x="25.1" y="27.5" width="1.3" height="1.3" fill="#2a3080"/><rect x="71.1" y="14.2" width="1.3" height="1.3" fill="#3a2850"/><rect x="85.1" y="8.9" width="1.3" height="1.3" fill="#8a6878"/><rect x="82.4" y="24.6" width="1.3" height="1.3" fill="#1a1420"/><rect x="63.7" y="5.4" width="1.3" height="1.3" fill="#a890b0"/><rect x="82.6" y="34.8" width="1.3" height="1.3" fill="#e0c8d0"/><rect x="20.0" y="27.0" width="1.3" height="1.3" fill="#1a1c4a"/><rect x="23.0" y="8.0" width="1.3" height="1.3" fill="#6a80f0"/><rect x="46.9" y="30.1" width="1.3" height="1.3" fill="#4a50a0"/><rect x="96.5" y="5.8" width="1.3" height="1.3" fill="#a88898"/><rect x="26.9" y="10.9" width="1.3" height="1.3" fill="#a0a8f0"/><rect x="38.4" y="29.5" width="1.3" height="1.3" fill="#c8c0e8"/><rect x="4.8" y="31.0" width="1.3" height="1.3" fill="#8aa0ff"/><rect x="86.6" y="8.4" width="1.3" height="1.3" fill="#4a2838"/><rect x="72.7" y="43.1" width="1.3" height="1.3" fill="#c8b0d8"/><rect x="40.2" y="39.3" width="1.3" height="1.3" fill="#5a70e0"/><rect x="17.0" y="2.9" width="1.3" height="1.3" fill="#5a70e0"/><rect x="79.6" y="36.4" width="1.3" height="1.3" fill="#4a2838"/><rect x="22.2" y="31.3" width="1.3" height="1.3" fill="#a0a8f0"/><rect x="76.1" y="42.6" width="1.3" height="1.3" fill="#1a1420"/><rect x="67.1" y="9.4" width="1.3" height="1.3" fill="#3a2850"/><rect x="79.5" y="6.4" width="1.3" height="1.3" fill="#e0c8d0"/><rect x="82.9" y="24.1" width="1.3" height="1.3" fill="#4a2838"/><rect x="87.5" y="18.8" width="1.3" height="1.3" fill="#e0c8d0"/><rect x="32.2" y="0.8" width="1.3" height="1.3" fill="#c8c0e8"/><rect x="27.2" y="17.4" width="1.3" height="1.3" fill="#2a3080"/><rect x="22.6" y="20.9" width="1.3" height="1.3" fill="#2a3080"/><rect x="54.8" y="24.3" width="1.3" height="1.3" fill="#e0c8e0"/><rect x="6.4" y="38.7" width="1.3" height="1.3" fill="#1a1c4a"/><rect x="66.6" y="0.2" width="1.3" height="1.3" fill="#3a2850"/><rect x="48.1" y="43.3" width="1.3" height="1.3" fill="#e0c8e0"/><rect x="98.6" y="17.7" width="1.3" height="1.3" fill="#c8a8b8"/><rect x="41.2" y="35.0" width="1.3" height="1.3" fill="#a0a8f0"/><rect x="55.4" y="9.3" width="1.3" height="1.3" fill="#7a90e8"/><rect x="65.3" y="27.0" width="1.3" height="1.3" fill="#3a2850"/><rect x="18.7" y="12.6" width="1.3" height="1.3" fill="#4a60d0"/><rect x="98.8" y="19.2" width="1.3" height="1.3" fill="#502838"/><rect x="93.5" y="2.0" width="1.3" height="1.3" fill="#502838"/><rect x="2.7" y="7.3" width="1.3" height="1.3" fill="#8aa0ff"/><rect x="67.1" y="11.8" width="1.3" height="1.3" fill="#c8b0d8"/><rect x="74.9" y="13.5" width="1.3" height="1.3" fill="#7a90e8"/><rect x="46.3" y="38.5" width="1.3" height="1.3" fill="#c8b0d8"/><rect x="95.4" y="0.5" width="1.3" height="1.3" fill="#8a6878"/><rect x="26.3" y="10.6" width="1.3" height="1.3" fill="#5a70e0"/><rect x="39.7" y="34.9" width="1.3" height="1.3" fill="#8aa0ff"/><rect x="93.1" y="20.9" width="1.3" height="1.3" fill="#502838"/><rect x="70.1" y="10.9" width="1.3" height="1.3" fill="#7a90e8"/><rect x="2.3" y="25.0" width="1.3" height="1.3" fill="#4a60d0"/><rect x="32.2" y="31.4" width="1.3" height="1.3" fill="#1a1c4a"/><rect x="80.6" y="15.8" width="1.3" height="1.3" fill="#a88898"/><rect x="44.7" y="13.5" width="1.3" height="1.3" fill="#8aa0ff"/><rect x="90.0" y="14.0" width="1.3" height="1.3" fill="#c8a8b8"/><rect x="26.3" y="9.3" width="1.3" height="1.3" fill="#c8c0e8"/><rect x="21.0" y="32.3" width="1.3" height="1.3" fill="#1a1c4a"/><rect x="67.6" y="7.7" width="1.3" height="1.3" fill="#c8b0d8"/><rect x="15.5" y="16.2" width="1.3" height="1.3" fill="#c8c0e8"/><rect x="42.8" y="0.4" width="1.3" height="1.3" fill="#6a80f0"/><rect x="40.1" y="14.0" width="1.3" height="1.3" fill="#4a60d0"/><rect x="2.1" y="7.6" width="1.3" height="1.3" fill="#8aa0ff"/><rect x="75.0" y="4.7" width="1.3" height="1.3" fill="#3a2850"/><rect x="42.8" y="41.8" width="1.3" height="1.3" fill="#4a60d0"/><rect x="49.6" y="33.9" width="1.3" height="1.3" fill="#e0c8e0"/><rect x="80.8" y="3.0" width="1.3" height="1.3" fill="#1a1420"/><rect x="94.2" y="14.0" width="1.3" height="1.3" fill="#e0c8d0"/><rect x="77.3" y="22.8" width="1.3" height="1.3" fill="#c8a8b8"/><rect x="14.7" y="27.5" width="1.3" height="1.3" fill="#a0a8f0"/><rect x="90.6" y="2.4" width="1.3" height="1.3" fill="#8a6878"/><rect x="61.3" y="38.5" width="1.3" height="1.3" fill="#4a50a0"/><rect x="71.0" y="18.4" width="1.3" height="1.3" fill="#7a90e8"/><rect x="91.9" y="5.3" width="1.3" height="1.3" fill="#a88898"/><rect x="68.6" y="19.7" width="1.3" height="1.3" fill="#a890b0"/><rect x="46.4" y="36.3" width="1.3" height="1.3" fill="#7a90e8"/><rect x="22.9" y="26.1" width="1.3" height="1.3" fill="#6a80f0"/><rect x="51.2" y="1.4" width="1.3" height="1.3" fill="#a890b0"/><rect x="44.9" y="12.3" width="1.3" height="1.3" fill="#6a80f0"/><rect x="59.1" y="40.4" width="1.3" height="1.3" fill="#e0c8e0"/><rect x="53.4" y="14.2" width="1.3" height="1.3" fill="#3a2850"/><rect x="73.4" y="13.6" width="1.3" height="1.3" fill="#a890b0"/><rect x="46.6" y="23.9" width="1.3" height="1.3" fill="#c8b0d8"/><rect x="86.2" y="5.5" width="1.3" height="1.3" fill="#1a1420"/><rect x="11.0" y="8.1" width="1.3" height="1.3" fill="#c8c0e8"/><rect x="82.4" y="34.6" width="1.3" height="1.3" fill="#8a6878"/><rect x="25.0" y="11.3" width="1.3" height="1.3" fill="#c8c0e8"/><rect x="86.5" y="30.9" width="1.3" height="1.3" fill="#4a2838"/><rect x="51.5" y="15.1" width="1.3" height="1.3" fill="#e0c8e0"/><rect x="53.3" y="37.6" width="1.3" height="1.3" fill="#e0c8e0"/><rect x="48.6" y="41.7" width="1.3" height="1.3" fill="#e0c8e0"/><rect x="7.3" y="24.1" width="1.3" height="1.3" fill="#5a70e0"/><rect x="87.2" y="3.1" width="1.3" height="1.3" fill="#1a1420"/><rect x="85.0" y="33.5" width="1.3" height="1.3" fill="#8a6878"/><rect x="96.7" y="2.9" width="1.3" height="1.3" fill="#e0c8d0"/><rect x="80.7" y="7.7" width="1.3" height="1.3" fill="#4a2838"/><rect x="3.7" y="15.0" width="1.3" height="1.3" fill="#4a60d0"/><rect x="82.9" y="5.1" width="1.3" height="1.3" fill="#e0c8d0"/><rect x="61.1" y="1.4" width="1.3" height="1.3" fill="#a890b0"/><rect x="61.3" y="39.1" width="1.3" height="1.3" fill="#c8b0d8"/><rect x="8.8" y="28.2" width="1.3" height="1.3" fill="#2a3080"/><rect x="87.1" y="31.6" width="1.3" height="1.3" fill="#e0c8d0"/><rect x="55.7" y="43.2" width="1.3" height="1.3" fill="#1a1838"/><rect x="1.5" y="14.7" width="1.3" height="1.3" fill="#2a3080"/><rect x="84.0" y="41.1" width="1.3" height="1.3" fill="#a88898"/><rect x="59.9" y="30.2" width="1.3" height="1.3" fill="#e0c8e0"/><rect x="76.2" y="7.4" width="1.3" height="1.3" fill="#8a6878"/><rect x="46.4" y="5.6" width="1.3" height="1.3" fill="#c8b0d8"/><rect x="25.7" y="14.9" width="1.3" height="1.3" fill="#2a3080"/><rect x="30.5" y="0.3" width="1.3" height="1.3" fill="#8aa0ff"/><rect x="68.8" y="32.0" width="1.3" height="1.3" fill="#3a2850"/><rect x="86.5" y="33.4" width="1.3" height="1.3" fill="#e0c8d0"/><rect x="14.5" y="27.4" width="1.3" height="1.3" fill="#a0a8f0"/><rect x="37.2" y="26.6" width="1.3" height="1.3" fill="#1a1c4a"/><rect x="45.4" y="22.0" width="1.3" height="1.3" fill="#c8b0d8"/><rect x="34.4" y="30.5" width="1.3" height="1.3" fill="#4a60d0"/><rect x="49.0" y="5.1" width="1.3" height="1.3" fill="#c8b0d8"/><rect x="86.7" y="12.4" width="1.3" height="1.3" fill="#502838"/><rect x="7.8" y="28.1" width="1.3" height="1.3" fill="#4a60d0"/><rect x="92.8" y="16.8" width="1.3" height="1.3" fill="#a88898"/><rect x="41.2" y="9.6" width="1.3" height="1.3" fill="#8aa0ff"/><rect x="36.5" y="14.5" width="1.3" height="1.3" fill="#5a70e0"/><rect x="65.5" y="11.6" width="1.3" height="1.3" fill="#a890b0"/><rect x="69.1" y="29.2" width="1.3" height="1.3" fill="#e0c8e0"/><rect x="1.5" y="16.3" width="1.3" height="1.3" fill="#1a1c4a"/><rect x="38.6" y="12.1" width="1.3" height="1.3" fill="#8aa0ff"/><rect x="81.6" y="36.9" width="1.3" height="1.3" fill="#8a6878"/><rect x="10.4" y="28.5" width="1.3" height="1.3" fill="#5a70e0"/><rect x="89.1" y="3.8" width="1.3" height="1.3" fill="#4a2838"/><rect x="1.6" y="1.3" width="1.3" height="1.3" fill="#2a3080"/><rect x="98.4" y="35.4" width="1.3" height="1.3" fill="#502838"/><rect x="2.3" y="27.5" width="1.3" height="1.3" fill="#5a70e0"/><rect x="7.2" y="7.4" width="1.3" height="1.3" fill="#2a3080"/><rect x="47.7" y="28.3" width="1.3" height="1.3" fill="#c8b0d8"/><rect x="96.5" y="42.4" width="1.3" height="1.3" fill="#502838"/><rect x="39.3" y="36.0" width="1.3" height="1.3" fill="#8aa0ff"/><rect x="99.2" y="2.9" width="1.3" height="1.3" fill="#1a1420"/><rect x="65.2" y="34.3" width="1.3" height="1.3" fill="#e0c8e0"/><rect x="51.5" y="25.4" width="1.3" height="1.3" fill="#1a1838"/><rect x="36.8" y="6.2" width="1.3" height="1.3" fill="#a0a8f0"/><rect x="9.5" y="34.5" width="1.3" height="1.3" fill="#6a80f0"/><rect x="16.6" y="28.2" width="1.3" height="1.3" fill="#1a1c4a"/><rect x="65.9" y="42.1" width="1.3" height="1.3" fill="#1a1838"/><rect x="77.1" y="5.2" width="1.3" height="1.3" fill="#1a1420"/><rect x="15.5" y="16.1" width="1.3" height="1.3" fill="#2a3080"/><rect x="93.9" y="38.9" width="1.3" height="1.3" fill="#c8a8b8"/><rect x="10.8" y="17.9" width="1.3" height="1.3" fill="#8aa0ff"/><rect x="77.2" y="4.1" width="1.3" height="1.3" fill="#8a6878"/><rect x="56.1" y="2.9" width="1.3" height="1.3" fill="#e0c8e0"/><rect x="12.9" y="3.8" width="1.3" height="1.3" fill="#1a1c4a"/><rect x="29.2" y="33.7" width="1.3" height="1.3" fill="#4a60d0"/><rect x="58.7" y="20.2" width="1.3" height="1.3" fill="#e0c8e0"/><rect x="58.5" y="7.4" width="1.3" height="1.3" fill="#c8b0d8"/><rect x="45.7" y="36.9" width="1.3" height="1.3" fill="#c8b0d8"/><rect x="80.5" y="21.9" width="1.3" height="1.3" fill="#e0c8d0"/><rect x="96.4" y="22.8" width="1.3" height="1.3" fill="#1a1420"/><rect x="61.4" y="41.8" width="1.3" height="1.3" fill="#a890b0"/><rect x="95.8" y="17.9" width="1.3" height="1.3" fill="#c8a8b8"/><rect x="22.8" y="34.6" width="1.3" height="1.3" fill="#8aa0ff"/><rect x="73.0" y="30.9" width="1.3" height="1.3" fill="#e0c8e0"/><rect x="29.2" y="26.8" width="1.3" height="1.3" fill="#a0a8f0"/><rect x="11.0" y="13.1" width="1.3" height="1.3" fill="#6a80f0"/><rect x="38.7" y="13.0" width="1.3" height="1.3" fill="#4a60d0"/><rect x="25.9" y="4.8" width="1.3" height="1.3" fill="#a0a8f0"/><rect x="32.7" y="21.2" width="1.3" height="1.3" fill="#c8c0e8"/><rect x="56.5" y="21.7" width="1.3" height="1.3" fill="#c8b0d8"/><rect x="39.2" y="13.0" width="1.3" height="1.3" fill="#1a1c4a"/><rect x="21.9" y="3.7" width="1.3" height="1.3" fill="#5a70e0"/><rect x="38.2" y="28.2" width="1.3" height="1.3" fill="#2a3080"/><rect x="44.8" y="2.2" width="1.3" height="1.3" fill="#6a80f0"/><rect x="16.2" y="16.6" width="1.3" height="1.3" fill="#2a3080"/><rect x="39.7" y="9.7" width="1.3" height="1.3" fill="#8aa0ff"/><rect x="70.9" y="1.4" width="1.3" height="1.3" fill="#3a2850"/><rect x="48.1" y="10.0" width="1.3" height="1.3" fill="#a890b0"/><rect x="52.4" y="31.8" width="1.3" height="1.3" fill="#3a2850"/><rect x="40.4" y="41.9" width="1.3" height="1.3" fill="#6a80f0"/><rect x="68.3" y="15.5" width="1.3" height="1.3" fill="#e0c8e0"/><rect x="36.3" y="26.0" width="1.3" height="1.3" fill="#2a3080"/><rect x="83.5" y="9.1" width="1.3" height="1.3" fill="#502838"/><rect x="58.6" y="13.7" width="1.3" height="1.3" fill="#1a1838"/><rect x="11.7" y="32.9" width="1.3" height="1.3" fill="#2a3080"/><rect x="5.3" y="4.0" width="1.3" height="1.3" fill="#1a1c4a"/><rect x="58.6" y="35.1" width="1.3" height="1.3" fill="#1a1838"/><rect x="64.3" y="16.2" width="1.3" height="1.3" fill="#c8b0d8"/><rect x="28.4" y="29.5" width="1.3" height="1.3" fill="#8aa0ff"/><rect x="39.4" y="9.8" width="1.3" height="1.3" fill="#1a1c4a"/><rect x="32.6" y="13.8" width="1.3" height="1.3" fill="#c8c0e8"/><rect x="78.4" y="27.9" width="1.3" height="1.3" fill="#c8a8b8"/><rect x="99.4" y="21.3" width="1.3" height="1.3" fill="#1a1420"/><rect x="62.1" y="24.0" width="1.3" height="1.3" fill="#3a2850"/><rect x="63.5" y="1.0" width="1.3" height="1.3" fill="#a890b0"/><rect x="74.8" y="25.2" width="1.3" height="1.3" fill="#c8b0d8"/><rect x="81.9" y="20.8" width="1.3" height="1.3" fill="#4a2838"/><rect x="67.6" y="42.7" width="1.3" height="1.3" fill="#4a50a0"/><rect x="7.5" y="33.9" width="1.3" height="1.3" fill="#5a70e0"/><rect x="68.1" y="6.1" width="1.3" height="1.3" fill="#4a50a0"/><rect x="44.5" y="19.0" width="1.3" height="1.3" fill="#8aa0ff"/><rect x="44.2" y="38.9" width="1.3" height="1.3" fill="#8aa0ff"/><rect x="83.0" y="41.5" width="1.3" height="1.3" fill="#4a2838"/><rect x="66.2" y="23.8" width="1.3" height="1.3" fill="#c8b0d8"/><rect x="69.9" y="17.2" width="1.3" height="1.3" fill="#a890b0"/><rect x="94.8" y="24.3" width="1.3" height="1.3" fill="#502838"/><rect x="21.0" y="18.0" width="1.3" height="1.3" fill="#c8c0e8"/><rect x="83.4" y="5.4" width="1.3" height="1.3" fill="#502838"/><rect x="27.2" y="17.7" width="1.3" height="1.3" fill="#a0a8f0"/><rect x="92.5" y="8.7" width="1.3" height="1.3" fill="#a88898"/><rect x="92.3" y="21.4" width="1.3" height="1.3" fill="#a88898"/><rect x="79.4" y="22.2" width="1.3" height="1.3" fill="#1a1420"/><rect x="10.5" y="32.2" width="1.3" height="1.3" fill="#c8c0e8"/><rect x="76.8" y="14.1" width="1.3" height="1.3" fill="#c8a8b8"/><rect x="34.4" y="7.1" width="1.3" height="1.3" fill="#2a3080"/><rect x="37.5" y="34.8" width="1.3" height="1.3" fill="#a0a8f0"/><rect x="45.0" y="25.6" width="1.3" height="1.3" fill="#1a1838"/><rect x="35.6" y="25.3" width="1.3" height="1.3" fill="#5a70e0"/><rect x="70.0" y="17.2" width="1.3" height="1.3" fill="#c8b0d8"/><rect x="69.3" y="10.1" width="1.3" height="1.3" fill="#3a2850"/><rect x="34.9" y="17.8" width="1.3" height="1.3" fill="#6a80f0"/><rect x="25.6" y="2.8" width="1.3" height="1.3" fill="#1a1c4a"/><rect x="37.5" y="31.1" width="1.3" height="1.3" fill="#a0a8f0"/><rect x="90.3" y="2.8" width="1.3" height="1.3" fill="#e0c8d0"/><rect x="97.0" y="39.5" width="1.3" height="1.3" fill="#1a1420"/><rect x="38.4" y="5.1" width="1.3" height="1.3" fill="#c8c0e8"/><rect x="74.9" y="4.4" width="1.3" height="1.3" fill="#3a2850"/><rect x="49.8" y="6.5" width="1.3" height="1.3" fill="#a890b0"/><rect x="35.0" y="6.9" width="1.3" height="1.3" fill="#5a70e0"/><rect x="33.1" y="6.6" width="1.3" height="1.3" fill="#2a3080"/><rect x="80.1" y="4.2" width="1.3" height="1.3" fill="#502838"/><rect x="15.5" y="42.8" width="1.3" height="1.3" fill="#2a3080"/><rect x="12.0" y="33.2" width="1.3" height="1.3" fill="#c8c0e8"/><rect x="89.4" y="40.1" width="1.3" height="1.3" fill="#a88898"/><rect x="32.3" y="4.7" width="1.3" height="1.3" fill="#1a1c4a"/><rect x="60.5" y="36.1" width="1.3" height="1.3" fill="#3a2850"/><rect x="11.0" y="15.5" width="1.3" height="1.3" fill="#c8c0e8"/><rect x="53.4" y="11.0" width="1.3" height="1.3" fill="#3a2850"/><rect x="28.5" y="24.3" width="1.3" height="1.3" fill="#1a1c4a"/><rect x="48.2" y="11.8" width="1.3" height="1.3" fill="#3a2850"/><rect x="78.9" y="40.9" width="1.3" height="1.3" fill="#e0c8d0"/><rect x="86.9" y="6.9" width="1.3" height="1.3" fill="#502838"/><rect x="54.1" y="5.7" width="1.3" height="1.3" fill="#c8b0d8"/><rect x="54.1" y="31.9" width="1.3" height="1.3" fill="#7a90e8"/><rect x="74.6" y="30.5" width="1.3" height="1.3" fill="#7a90e8"/><rect x="77.1" y="11.3" width="1.3" height="1.3" fill="#c8a8b8"/><rect x="42.5" y="33.8" width="1.3" height="1.3" fill="#4a60d0"/><rect x="47.8" y="29.8" width="1.3" height="1.3" fill="#3a2850"/><rect x="72.5" y="41.0" width="1.3" height="1.3" fill="#7a90e8"/><rect x="26.9" y="31.5" width="1.3" height="1.3" fill="#4a60d0"/><rect x="7.5" y="23.9" width="1.3" height="1.3" fill="#8aa0ff"/><rect x="30.1" y="0.1" width="1.3" height="1.3" fill="#8aa0ff"/><rect x="19.4" y="15.9" width="1.3" height="1.3" fill="#2a3080"/><rect x="86.7" y="2.7" width="1.3" height="1.3" fill="#a88898"/><rect x="66.1" y="6.1" width="1.3" height="1.3" fill="#1a1838"/><rect x="56.7" y="42.7" width="1.3" height="1.3" fill="#a890b0"/><rect x="96.8" y="42.3" width="1.3" height="1.3" fill="#8a6878"/><rect x="53.9" y="19.0" width="1.3" height="1.3" fill="#a890b0"/><rect x="18.3" y="22.9" width="1.3" height="1.3" fill="#2a3080"/><rect x="60.9" y="40.2" width="1.3" height="1.3" fill="#a890b0"/><rect x="10.1" y="6.1" width="1.3" height="1.3" fill="#4a60d0"/><rect x="7.8" y="21.1" width="1.3" height="1.3" fill="#8aa0ff"/><rect x="13.4" y="13.0" width="1.3" height="1.3" fill="#2a3080"/><rect x="21.8" y="11.8" width="1.3" height="1.3" fill="#c8c0e8"/><rect x="97.0" y="41.2" width="1.3" height="1.3" fill="#e0c8d0"/><rect x="85.3" y="40.6" width="1.3" height="1.3" fill="#c8a8b8"/><rect x="60.5" y="34.5" width="1.3" height="1.3" fill="#a890b0"/><rect x="56.8" y="39.0" width="1.3" height="1.3" fill="#3a2850"/><rect x="92.8" y="3.7" width="1.3" height="1.3" fill="#8a6878"/><rect x="15.6" y="39.6" width="1.3" height="1.3" fill="#8aa0ff"/><rect x="11.1" y="37.7" width="1.3" height="1.3" fill="#6a80f0"/><rect x="41.2" y="6.5" width="1.3" height="1.3" fill="#c8c0e8"/><rect x="68.4" y="22.6" width="1.3" height="1.3" fill="#7a90e8"/><rect x="76.2" y="29.1" width="1.3" height="1.3" fill="#c8a8b8"/><rect x="0.1" y="2.9" width="1.3" height="1.3" fill="#4a60d0"/><rect x="97.0" y="36.2" width="1.3" height="1.3" fill="#1a1420"/><rect x="34.8" y="9.5" width="1.3" height="1.3" fill="#a0a8f0"/><rect x="1.5" y="33.4" width="1.3" height="1.3" fill="#1a1c4a"/><rect x="4.8" y="16.0" width="1.3" height="1.3" fill="#2a3080"/><rect x="51.8" y="15.3" width="1.3" height="1.3" fill="#a890b0"/><rect x="23.3" y="38.3" width="1.3" height="1.3" fill="#c8c0e8"/><rect x="20.0" y="9.2" width="1.3" height="1.3" fill="#5a70e0"/><rect x="47.6" y="34.0" width="1.3" height="1.3" fill="#3a2850"/><rect x="18.4" y="29.4" width="1.3" height="1.3" fill="#1a1c4a"/><rect x="59.2" y="24.9" width="1.3" height="1.3" fill="#7a90e8"/><rect x="87.2" y="8.0" width="1.3" height="1.3" fill="#e0c8d0"/><rect x="6.5" y="22.1" width="1.3" height="1.3" fill="#4a60d0"/><rect x="67.0" y="34.3" width="1.3" height="1.3" fill="#7a90e8"/><rect x="9.2" y="29.7" width="1.3" height="1.3" fill="#4a60d0"/><rect x="43.9" y="1.9" width="1.3" height="1.3" fill="#c8c0e8"/><rect x="36.9" y="15.5" width="1.3" height="1.3" fill="#8aa0ff"/><rect x="98.5" y="16.8" width="1.3" height="1.3" fill="#e0c8d0"/><rect x="41.7" y="29.1" width="1.3" height="1.3" fill="#4a60d0"/><rect x="33.6" y="34.3" width="1.3" height="1.3" fill="#a0a8f0"/><rect x="90.1" y="24.4" width="1.3" height="1.3" fill="#a88898"/><rect x="6.8" y="42.3" width="1.3" height="1.3" fill="#6a80f0"/><rect x="5.2" y="1.4" width="1.3" height="1.3" fill="#8aa0ff"/><rect x="42.2" y="6.9" width="1.3" height="1.3" fill="#8aa0ff"/><rect x="20.4" y="38.1" width="1.3" height="1.3" fill="#4a60d0"/><rect x="92.6" y="14.8" width="1.3" height="1.3" fill="#e0c8d0"/><rect x="14.1" y="31.0" width="1.3" height="1.3" fill="#6a80f0"/><rect x="19.2" y="5.9" width="1.3" height="1.3" fill="#4a60d0"/><rect x="87.7" y="31.5" width="1.3" height="1.3" fill="#a88898"/><rect x="45.1" y="16.2" width="1.3" height="1.3" fill="#c8b0d8"/><rect x="91.8" y="6.4" width="1.3" height="1.3" fill="#502838"/><rect x="7.1" y="8.0" width="1.3" height="1.3" fill="#2a3080"/><rect x="67.2" y="5.3" width="1.3" height="1.3" fill="#3a2850"/><rect x="18.2" y="5.3" width="1.3" height="1.3" fill="#5a70e0"/><rect x="75.8" y="22.9" width="1.3" height="1.3" fill="#c8a8b8"/><rect x="8.1" y="9.7" width="1.3" height="1.3" fill="#8aa0ff"/><rect x="91.6" y="42.3" width="1.3" height="1.3" fill="#a88898"/><rect x="50.1" y="7.0" width="1.3" height="1.3" fill="#3a2850"/><rect x="63.4" y="4.5" width="1.3" height="1.3" fill="#1a1838"/><rect x="78.8" y="42.2" width="1.3" height="1.3" fill="#1a1420"/><rect x="34.8" y="43.3" width="1.3" height="1.3" fill="#5a70e0"/><rect x="46.2" y="8.3" width="1.3" height="1.3" fill="#1a1838"/><rect x="97.2" y="1.1" width="1.3" height="1.3" fill="#502838"/><rect x="58.1" y="23.6" width="1.3" height="1.3" fill="#3a2850"/><rect x="16.2" y="7.5" width="1.3" height="1.3" fill="#4a60d0"/><rect x="95.5" y="1.1" width="1.3" height="1.3" fill="#1a1420"/><rect x="79.4" y="21.7" width="1.3" height="1.3" fill="#a88898"/><rect x="6.3" y="1.1" width="1.3" height="1.3" fill="#2a3080"/><rect x="1.5" y="13.2" width="1.3" height="1.3" fill="#6a80f0"/><rect x="33.5" y="36.8" width="1.3" height="1.3" fill="#2a3080"/><rect x="68.4" y="10.9" width="1.3" height="1.3" fill="#a890b0"/><rect x="31.5" y="15.5" width="1.3" height="1.3" fill="#a0a8f0"/><rect x="42.7" y="25.5" width="1.3" height="1.3" fill="#1a1c4a"/><rect x="33.0" y="39.7" width="1.3" height="1.3" fill="#4a60d0"/><rect x="67.4" y="27.0" width="1.3" height="1.3" fill="#a890b0"/><rect x="16.2" y="22.1" width="1.3" height="1.3" fill="#1a1c4a"/><rect x="76.1" y="40.5" width="1.3" height="1.3" fill="#4a2838"/><rect x="23.4" y="25.3" width="1.3" height="1.3" fill="#c8c0e8"/><rect x="69.8" y="14.7" width="1.3" height="1.3" fill="#a890b0"/><rect x="9.6" y="29.8" width="1.3" height="1.3" fill="#2a3080"/><rect x="47.7" y="4.9" width="1.3" height="1.3" fill="#a890b0"/><rect x="91.7" y="22.3" width="1.3" height="1.3" fill="#1a1420"/><rect x="68.2" y="28.8" width="1.3" height="1.3" fill="#1a1838"/><rect x="26.7" y="24.9" width="1.3" height="1.3" fill="#5a70e0"/><rect x="5.6" y="13.9" width="1.3" height="1.3" fill="#5a70e0"/><rect x="6.1" y="6.2" width="1.3" height="1.3" fill="#6a80f0"/><rect x="27.8" y="19.2" width="1.3" height="1.3" fill="#8aa0ff"/><rect x="27.9" y="2.2" width="1.3" height="1.3" fill="#a0a8f0"/><rect x="79.3" y="11.1" width="1.3" height="1.3" fill="#a88898"/><rect x="50.1" y="18.5" width="1.3" height="1.3" fill="#7a90e8"/><rect x="5.8" y="3.1" width="1.3" height="1.3" fill="#5a70e0"/><rect x="15.1" y="13.7" width="1.3" height="1.3" fill="#2a3080"/><rect x="92.1" y="28.1" width="1.3" height="1.3" fill="#a88898"/><rect x="82.9" y="34.9" width="1.3" height="1.3" fill="#a88898"/><rect x="91.2" y="29.7" width="1.3" height="1.3" fill="#502838"/><rect x="72.5" y="11.9" width="1.3" height="1.3" fill="#3a2850"/><rect x="79.6" y="7.6" width="1.3" height="1.3" fill="#502838"/><rect x="47.3" y="31.0" width="1.3" height="1.3" fill="#c8b0d8"/><rect x="91.4" y="1.0" width="1.3" height="1.3" fill="#8a6878"/><rect x="65.4" y="20.4" width="1.3" height="1.3" fill="#a890b0"/><rect x="60.7" y="39.5" width="1.3" height="1.3" fill="#a890b0"/><rect x="86.0" y="42.4" width="1.3" height="1.3" fill="#e0c8d0"/><rect x="10.9" y="42.6" width="1.3" height="1.3" fill="#a0a8f0"/><rect x="30.9" y="8.1" width="1.3" height="1.3" fill="#1a1c4a"/><rect x="97.9" y="27.0" width="1.3" height="1.3" fill="#e0c8d0"/><rect x="74.5" y="29.0" width="1.3" height="1.3" fill="#1a1838"/><rect x="86.3" y="33.4" width="1.3" height="1.3" fill="#502838"/><rect x="74.7" y="0.1" width="1.3" height="1.3" fill="#3a2850"/><rect x="93.8" y="27.7" width="1.3" height="1.3" fill="#1a1420"/><rect x="22.4" y="30.9" width="1.3" height="1.3" fill="#6a80f0"/><rect x="2.3" y="7.0" width="1.3" height="1.3" fill="#4a60d0"/><rect x="22.9" y="26.8" width="1.3" height="1.3" fill="#8aa0ff"/><rect x="69.0" y="22.4" width="1.3" height="1.3" fill="#3a2850"/><rect x="46.4" y="30.0" width="1.3" height="1.3" fill="#c8b0d8"/><rect x="64.4" y="29.8" width="1.3" height="1.3" fill="#c8b0d8"/><rect x="32.9" y="40.2" width="1.3" height="1.3" fill="#6a80f0"/><rect x="28.9" y="41.3" width="1.3" height="1.3" fill="#1a1c4a"/><rect x="95.7" y="33.6" width="1.3" height="1.3" fill="#4a2838"/><rect x="10.8" y="9.4" width="1.3" height="1.3" fill="#5a70e0"/><rect x="6.5" y="4.2" width="1.3" height="1.3" fill="#6a80f0"/><rect x="47.0" y="32.3" width="1.3" height="1.3" fill="#e0c8e0"/><rect x="28.7" y="40.5" width="1.3" height="1.3" fill="#2a3080"/><rect x="24.0" y="14.2" width="1.3" height="1.3" fill="#8aa0ff"/><rect x="33.8" y="41.6" width="1.3" height="1.3" fill="#1a1c4a"/><rect x="52.4" y="41.2" width="1.3" height="1.3" fill="#a890b0"/></svg>
    <div class="a" style="left:55px;top:16px;width:2.5px;height:26px;background:#3a50f0"></div>
  </div>
  <div class="a" style="left:141px;top:566.5px;font-family:'Liberation Serif',serif;font-size:5.3px;line-height:6px;color:#6a7aa0;white-space:nowrap">Sonnenberg-Konferenz</div>
  <div class="a ph" style="left:209px;top:520px;width:80px;height:53.5px;background:linear-gradient(180deg,#a8bedc 0%,#b4c4dc 18%,#c8c4c0 35%,#c0b4a8 60%,#b8a898 100%)">
    <svg class="a" style="left:0;top:0;filter:blur(0.6px)" width="80" height="54" viewBox="0 0 80 54">
      <rect x="23" y="0" width="27" height="14" fill="#9a9aa4"/>
      <rect x="0" y="6" width="22" height="14" fill="#d8d4cc"/>
      <rect x="52" y="8" width="28" height="8" fill="#8a9098"/>
      <ellipse cx="70" cy="18" rx="12" ry="8" fill="#8a9a48"/>
      <rect x="55" y="14" width="8" height="12" fill="#e8e8e4"/>
      <path d="M0 12 L4 14 L8 22 L14 16 L18 8 L26 10 L24 20 L30 18 L36 10 L42 12 L40 20 L48 18 L54 26 L58 36 L56 48 L50 50 L44 46 L38 50 L34 44 L28 52 L20 50 L12 53 L6 48 L2 50 L0 46 Z" fill="#2c40c8"/>
      <path d="M6 16 L12 24 L10 40 L16 38 L14 28" fill="none" stroke="#5070e8" stroke-width="1.5"/>
      <path d="M24 14 L30 30 L26 46" fill="none" stroke="#1a2890" stroke-width="2"/>
      <path d="M38 16 L44 32 L42 46" fill="none" stroke="#4a60e0" stroke-width="1.5"/>
      <path d="M60 22 L64 20 L68 22 L70 28 L68 40 L66 46 L62 46 L60 36 Z" fill="#3048d0"/>
      <path d="M72 20 L76 18 L80 24 L78 38 L74 40 Z" fill="#2c40c0"/>
      <rect x="62" y="46" width="2" height="4" fill="#302828"/>
      <rect x="66" y="46" width="2" height="4" fill="#302828"/>
    </svg>
  </div>
</div>
<div id="col1" class="a" style="left:0;top:0;width:789px;height:613px;-webkit-mask-image:linear-gradient(90deg,transparent 41px,#000 48.5px,#000 284px,transparent 291px),linear-gradient(180deg,transparent 227px,#000 234px,#000 399.5px,transparent 405px);-webkit-mask-composite:source-in;mask-composite:intersect">
  <div class="a" style="left:38px;top:224px;width:256px;height:184px;background:#fff"></div>
  <svg class="a" style="left:225px;top:232px" width="40" height="34" viewBox="0 0 40 34"><circle cx="18" cy="15" r="13.5" fill="none" stroke="#e6eaf2" stroke-width="2"/><circle cx="29.0" cy="15.0" r="2.4" fill="#dceaa0" opacity="0.6"/><circle cx="27.5" cy="20.5" r="2.4" fill="#dceaa0" opacity="0.6"/><circle cx="23.5" cy="24.5" r="2.4" fill="#dceaa0" opacity="0.6"/><circle cx="18.0" cy="26.0" r="2.4" fill="#dceaa0" opacity="0.6"/><circle cx="12.5" cy="24.5" r="2.4" fill="#dceaa0" opacity="0.6"/><circle cx="8.5" cy="20.5" r="2.4" fill="#dceaa0" opacity="0.6"/><circle cx="7.0" cy="15.0" r="2.4" fill="#dceaa0" opacity="0.6"/><circle cx="8.5" cy="9.5" r="2.4" fill="#dceaa0" opacity="0.6"/><circle cx="12.5" cy="5.5" r="2.4" fill="#dceaa0" opacity="0.6"/><circle cx="18.0" cy="4.0" r="2.4" fill="#dceaa0" opacity="0.6"/><circle cx="23.5" cy="5.5" r="2.4" fill="#dceaa0" opacity="0.6"/><circle cx="27.5" cy="9.5" r="2.4" fill="#dceaa0" opacity="0.6"/></svg>
  <div class="a pe" style="left:237px;top:248.5px">PULSE<span style="font-size:3px">of</span>EUROPE</div>
  <div class="de b" style="left:53.5px;top:231.6px;font-size:12.9px;color:#1f3672">Warum Europa unverzichtbar ist</div>
  <div class="de b" style="left:53.5px;top:257px;font-size:11.4px;color:#26448c">Final Call for Europe</div>
  <div class="de" style="left:53.5px;top:273.3px;font-size:10.05px;color:#34447a">(Endlich) zur Selbständigkeit gezwungen</div>
  <div class="de b" style="left:53.5px;top:288.7px;font-size:10.05px;color:#26448c">Das (neue) politische Umfeld</div>
  <div id="bl" class="a" style="left:63.6px;top:301.5px;font-size:7.95px;line-height:9.2px;color:#2c3a6a;white-space:nowrap">
    <div class="bi">Der russische Angriffskrieg in der Ukraine ist auch ein Angriff<br>auf Europa</div>
    <div class="bi">Neue US-Administration wendet sich weltweit von<br>Unterstützungsleistungen ab – auch für Europa</div>
    <div class="bi">Zuwanderung nach Europa hält an; Migrationsskepsis und<br>Zuspruch für rechtsextreme Parteien steigen</div>
    <div class="bi">Ein europäischer Rechtsruck in den Nationalstaaten wird die<br>Europäische Union handlungsunfähiger machen</div>
    <div class="bi">Krieg und Klimawandel nehmen als europäische<br>Herausforderungen beständig zu</div>
  </div>
</div>
<div class="a" style="left:630px;top:554.2px;width:220px;filter:blur(1.2px);color:rgba(150,130,140,.3);white-space:nowrap">
  <div style="font-size:16px;line-height:21px;font-weight:bold;letter-spacing:-0.6px">Активація Windows</div>
  <div style="font-size:11px;line-height:16px">Перейдіть до розділу "Параметри"</div>
  <div style="font-size:11px;line-height:16px">Windows.</div>
</div>
</body></html>
